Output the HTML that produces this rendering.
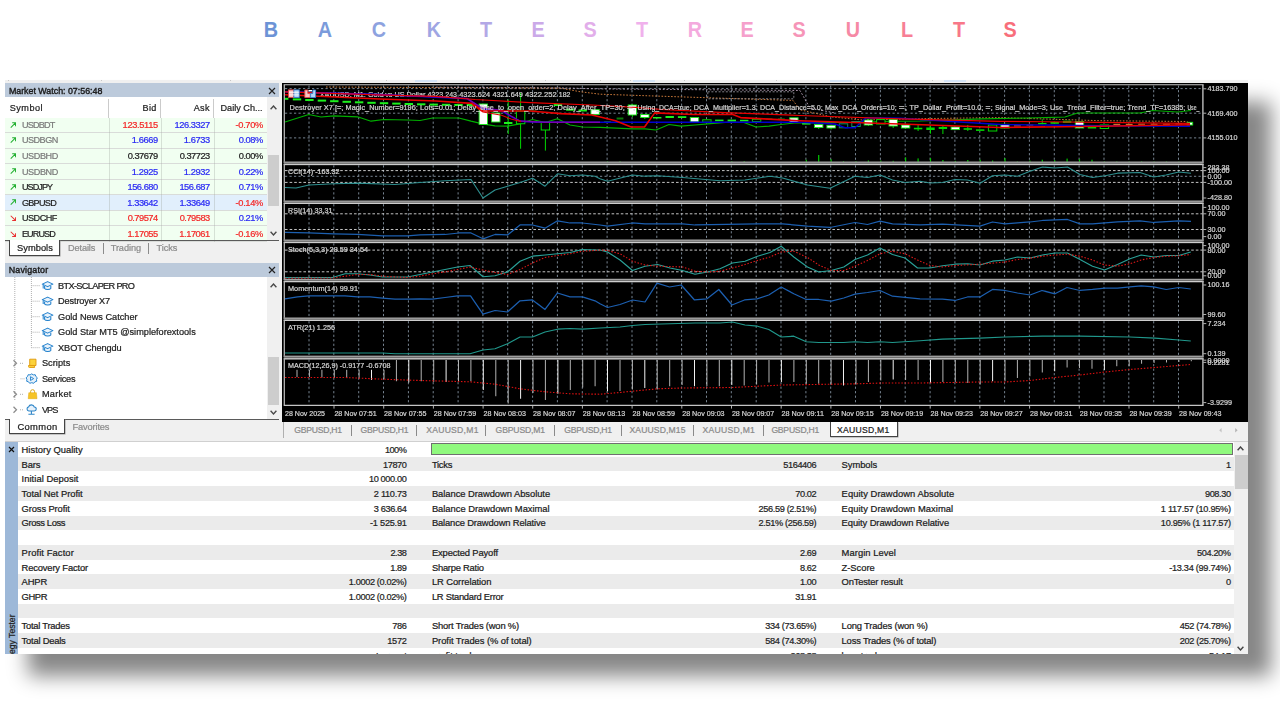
<!DOCTYPE html>
<html><head><meta charset="utf-8"><title>Backtest Results</title>
<style>
html,body{margin:0;padding:0;background:#fff;}
body{width:1280px;height:720px;overflow:hidden;position:relative;font-family:"Liberation Sans",sans-serif;}
#title{position:absolute;left:0;top:0;width:1280px;height:60px;}
#title span{position:absolute;top:14.6px;width:40px;margin-left:-20px;text-align:center;font-weight:bold;font-size:21.3px;line-height:30px;transform:scaleX(0.93);}
#shadow{position:absolute;left:5px;top:80px;width:1243px;height:574px;background:#f0f0f0;box-shadow:23px 22px 19px 0px rgba(0,0,0,0.475);}
#clip{position:absolute;left:5px;top:80px;width:1243px;height:574px;overflow:hidden;filter:blur(0.42px);}
#in{position:absolute;left:-5px;top:-80px;width:1280px;height:720px;-webkit-text-stroke:0.22px;}
svg{position:absolute;display:block;}
</style></head><body>

<div id="title">
<span style="left:271px;color:#6c93d6">B</span>
<span style="left:325px;color:#7b9bdb">A</span>
<span style="left:379px;color:#8da2df">C</span>
<span style="left:434px;color:#9fa6e3">K</span>
<span style="left:485.5px;color:#b3a8e6">T</span>
<span style="left:538px;color:#cba9e8">E</span>
<span style="left:590px;color:#e2aeea">S</span>
<span style="left:642px;color:#f0b1ec">T</span>
<span style="left:694.5px;color:#f4aade">R</span>
<span style="left:747px;color:#f5a0cb">E</span>
<span style="left:799px;color:#f695b8">S</span>
<span style="left:852.5px;color:#f689a5">U</span>
<span style="left:907px;color:#f77f95">L</span>
<span style="left:959px;color:#f87788">T</span>
<span style="left:1010px;color:#f86e7b">S</span>
</div>
<div id="shadow"></div><div id="clip"><div id="in">
<div style="position:absolute;left:8.00px;top:80.30px;width:1.00px;height:1.20px;background:#c6c6c6;"></div>
<div style="position:absolute;left:101.00px;top:80.30px;width:1.00px;height:1.20px;background:#c6c6c6;"></div>
<div style="position:absolute;left:230.00px;top:80.30px;width:1.00px;height:1.20px;background:#c6c6c6;"></div>
<div style="position:absolute;left:386.00px;top:80.30px;width:1.00px;height:1.20px;background:#c6c6c6;"></div>
<div style="position:absolute;left:466.00px;top:80.30px;width:1.00px;height:1.20px;background:#c6c6c6;"></div>
<div style="position:absolute;left:545.00px;top:80.30px;width:1.00px;height:1.20px;background:#c6c6c6;"></div>
<div style="position:absolute;left:600.00px;top:80.30px;width:1.00px;height:1.20px;background:#c6c6c6;"></div>
<div style="position:absolute;left:630.00px;top:80.30px;width:1.00px;height:1.20px;background:#c6c6c6;"></div>
<div style="position:absolute;left:684.00px;top:80.30px;width:1.00px;height:1.20px;background:#c6c6c6;"></div>
<div style="position:absolute;left:776.00px;top:80.30px;width:1.00px;height:1.20px;background:#c6c6c6;"></div>
<div style="position:absolute;left:932.00px;top:80.30px;width:1.00px;height:1.20px;background:#c6c6c6;"></div>
<div style="position:absolute;left:415.00px;top:80.00px;width:22.00px;height:1.60px;background:#d3e3f6;"></div>
<div style="position:absolute;left:633.00px;top:80.00px;width:22.00px;height:1.60px;background:#d3e3f6;"></div>
<div style="position:absolute;left:830.00px;top:80.00px;width:22.00px;height:1.60px;background:#d3e3f6;"></div>
<div style="position:absolute;left:944.00px;top:80.00px;width:22.00px;height:1.60px;background:#d3e3f6;"></div>
<div style="position:absolute;left:5.00px;top:83.20px;width:274.00px;height:13.80px;background:#bccadb;"></div>
<div style="position:absolute;top:84.40px;height:14px;line-height:14px;font-size:8.9px;color:#1a1a1a;white-space:nowrap;letter-spacing:-0.021px;left:8.90px;-webkit-text-stroke:0.38px;">Market Watch: 07:56:48</div>
<svg style="left:267.5px;top:86.5px" width="8" height="8" viewBox="0 0 8 8"><path d="M1 1L7 7M7 1L1 7" stroke="#222" stroke-width="1.2" fill="none"/></svg>
<div style="position:absolute;left:5.00px;top:97.00px;width:262.00px;height:20.50px;background:#fff;"></div>
<div style="position:absolute;top:101.10px;height:14px;line-height:14px;font-size:9.1px;color:#222;white-space:nowrap;letter-spacing:0.471px;left:9.80px;">Symbol</div>
<div style="position:absolute;top:101.10px;height:14px;line-height:14px;font-size:9.1px;color:#222;white-space:nowrap;letter-spacing:0.377px;margin-right:-0.377px;right:1123.60px;text-align:right;">Bid</div>
<div style="position:absolute;top:101.10px;height:14px;line-height:14px;font-size:9.1px;color:#222;white-space:nowrap;letter-spacing:0.398px;margin-right:-0.398px;right:1070.40px;text-align:right;">Ask</div>
<div style="position:absolute;top:101.10px;height:14px;line-height:14px;font-size:9.1px;color:#222;white-space:nowrap;letter-spacing:0.019px;left:220.50px;">Daily Ch...</div>
<div style="position:absolute;left:108.30px;top:98.50px;width:1.20px;height:19.00px;background:#cbcbcb;"></div>
<div style="position:absolute;left:160.20px;top:98.50px;width:1.20px;height:19.00px;background:#cbcbcb;"></div>
<div style="position:absolute;left:213.10px;top:98.50px;width:1.20px;height:19.00px;background:#cbcbcb;"></div>
<div style="position:absolute;left:5.00px;top:117.50px;width:262.00px;height:15.52px;background:#f1fff1;"></div>
<div style="position:absolute;left:5.00px;top:132.22px;width:262.00px;height:0.90px;background:#d9dcd9;"></div>
<svg style="left:9.6px;top:121.66px" width="6.4" height="6.4" viewBox="0 0 7 7"><path d="M0.8 6.2L6 1M2.4 0.9H6.1V4.6" stroke="#22b030" stroke-width="1.1" fill="none"/></svg>
<div style="position:absolute;top:117.96px;height:14px;line-height:14px;font-size:9.1px;color:#7a7a7a;white-space:nowrap;letter-spacing:-0.790px;left:21.90px;">USDBDT</div>
<div style="position:absolute;top:117.96px;height:14px;line-height:14px;font-size:9.3px;color:#f42828;white-space:nowrap;letter-spacing:-0.350px;margin-right:0.350px;right:1121.80px;text-align:right;">123.5115</div>
<div style="position:absolute;top:117.96px;height:14px;line-height:14px;font-size:9.3px;color:#2a2af4;white-space:nowrap;letter-spacing:-0.441px;margin-right:0.441px;right:1069.80px;text-align:right;">126.3327</div>
<div style="position:absolute;top:117.96px;height:14px;line-height:14px;font-size:9.3px;color:#f42828;white-space:nowrap;letter-spacing:-0.371px;margin-right:0.371px;right:1016.80px;text-align:right;">-0.70%</div>
<div style="position:absolute;left:5.00px;top:133.02px;width:262.00px;height:15.52px;background:#f1fff1;"></div>
<div style="position:absolute;left:5.00px;top:147.74px;width:262.00px;height:0.90px;background:#d9dcd9;"></div>
<svg style="left:9.6px;top:137.18px" width="6.4" height="6.4" viewBox="0 0 7 7"><path d="M0.8 6.2L6 1M2.4 0.9H6.1V4.6" stroke="#22b030" stroke-width="1.1" fill="none"/></svg>
<div style="position:absolute;top:133.48px;height:14px;line-height:14px;font-size:9.1px;color:#7a7a7a;white-space:nowrap;letter-spacing:-0.499px;left:21.90px;">USDBGN</div>
<div style="position:absolute;top:133.48px;height:14px;line-height:14px;font-size:9.3px;color:#2a2af4;white-space:nowrap;letter-spacing:-0.397px;margin-right:0.397px;right:1121.80px;text-align:right;">1.6669</div>
<div style="position:absolute;top:133.48px;height:14px;line-height:14px;font-size:9.3px;color:#2a2af4;white-space:nowrap;letter-spacing:-0.392px;margin-right:0.392px;right:1069.80px;text-align:right;">1.6733</div>
<div style="position:absolute;top:133.48px;height:14px;line-height:14px;font-size:9.3px;color:#2a2af4;white-space:nowrap;letter-spacing:-0.489px;margin-right:0.489px;right:1016.80px;text-align:right;">0.08%</div>
<div style="position:absolute;left:5.00px;top:148.54px;width:262.00px;height:15.52px;background:#f1fff1;"></div>
<div style="position:absolute;left:5.00px;top:163.26px;width:262.00px;height:0.90px;background:#d9dcd9;"></div>
<svg style="left:9.6px;top:152.70px" width="6.4" height="6.4" viewBox="0 0 7 7"><path d="M0.8 6.2L6 1M2.4 0.9H6.1V4.6" stroke="#22b030" stroke-width="1.1" fill="none"/></svg>
<div style="position:absolute;top:149.00px;height:14px;line-height:14px;font-size:9.1px;color:#7a7a7a;white-space:nowrap;letter-spacing:-0.391px;left:21.90px;">USDBHD</div>
<div style="position:absolute;top:149.00px;height:14px;line-height:14px;font-size:9.3px;color:#222;white-space:nowrap;letter-spacing:-0.516px;margin-right:0.516px;right:1121.80px;text-align:right;">0.37679</div>
<div style="position:absolute;top:149.00px;height:14px;line-height:14px;font-size:9.3px;color:#222;white-space:nowrap;letter-spacing:-0.514px;margin-right:0.514px;right:1069.80px;text-align:right;">0.37723</div>
<div style="position:absolute;top:149.00px;height:14px;line-height:14px;font-size:9.3px;color:#222;white-space:nowrap;letter-spacing:-0.489px;margin-right:0.489px;right:1016.80px;text-align:right;">0.00%</div>
<div style="position:absolute;left:5.00px;top:164.06px;width:262.00px;height:15.52px;background:#f1fff1;"></div>
<div style="position:absolute;left:5.00px;top:178.78px;width:262.00px;height:0.90px;background:#d9dcd9;"></div>
<svg style="left:9.6px;top:168.22px" width="6.4" height="6.4" viewBox="0 0 7 7"><path d="M0.8 6.2L6 1M2.4 0.9H6.1V4.6" stroke="#22b030" stroke-width="1.1" fill="none"/></svg>
<div style="position:absolute;top:164.52px;height:14px;line-height:14px;font-size:9.1px;color:#7a7a7a;white-space:nowrap;letter-spacing:-0.391px;left:21.90px;">USDBND</div>
<div style="position:absolute;top:164.52px;height:14px;line-height:14px;font-size:9.3px;color:#2a2af4;white-space:nowrap;letter-spacing:-0.397px;margin-right:0.397px;right:1121.80px;text-align:right;">1.2925</div>
<div style="position:absolute;top:164.52px;height:14px;line-height:14px;font-size:9.3px;color:#2a2af4;white-space:nowrap;letter-spacing:-0.390px;margin-right:0.390px;right:1069.80px;text-align:right;">1.2932</div>
<div style="position:absolute;top:164.52px;height:14px;line-height:14px;font-size:9.3px;color:#2a2af4;white-space:nowrap;letter-spacing:-0.489px;margin-right:0.489px;right:1016.80px;text-align:right;">0.22%</div>
<div style="position:absolute;left:5.00px;top:179.58px;width:262.00px;height:15.52px;background:#f1fff1;"></div>
<div style="position:absolute;left:5.00px;top:194.30px;width:262.00px;height:0.90px;background:#d9dcd9;"></div>
<svg style="left:9.6px;top:183.74px" width="6.4" height="6.4" viewBox="0 0 7 7"><path d="M0.8 6.2L6 1M2.4 0.9H6.1V4.6" stroke="#22b030" stroke-width="1.1" fill="none"/></svg>
<div style="position:absolute;top:180.04px;height:14px;line-height:14px;font-size:9.1px;color:#222;white-space:nowrap;letter-spacing:-0.929px;left:21.90px;">USDJPY</div>
<div style="position:absolute;top:180.04px;height:14px;line-height:14px;font-size:9.3px;color:#2a2af4;white-space:nowrap;letter-spacing:-0.478px;margin-right:0.478px;right:1121.80px;text-align:right;">156.680</div>
<div style="position:absolute;top:180.04px;height:14px;line-height:14px;font-size:9.3px;color:#2a2af4;white-space:nowrap;letter-spacing:-0.471px;margin-right:0.471px;right:1069.80px;text-align:right;">156.687</div>
<div style="position:absolute;top:180.04px;height:14px;line-height:14px;font-size:9.3px;color:#2a2af4;white-space:nowrap;letter-spacing:-0.489px;margin-right:0.489px;right:1016.80px;text-align:right;">0.71%</div>
<div style="position:absolute;left:5.00px;top:195.10px;width:262.00px;height:15.52px;background:#e1effc;"></div>
<div style="position:absolute;left:5.00px;top:209.82px;width:262.00px;height:0.90px;background:#d9dcd9;"></div>
<svg style="left:9.6px;top:199.26px" width="6.4" height="6.4" viewBox="0 0 7 7"><path d="M0.8 6.2L6 1M2.4 0.9H6.1V4.6" stroke="#22b030" stroke-width="1.1" fill="none"/></svg>
<div style="position:absolute;top:195.56px;height:14px;line-height:14px;font-size:9.1px;color:#222;white-space:nowrap;letter-spacing:-0.720px;left:21.90px;">GBPUSD</div>
<div style="position:absolute;top:195.56px;height:14px;line-height:14px;font-size:9.3px;color:#2a2af4;white-space:nowrap;letter-spacing:-0.461px;margin-right:0.461px;right:1121.80px;text-align:right;">1.33642</div>
<div style="position:absolute;top:195.56px;height:14px;line-height:14px;font-size:9.3px;color:#2a2af4;white-space:nowrap;letter-spacing:-0.471px;margin-right:0.471px;right:1069.80px;text-align:right;">1.33649</div>
<div style="position:absolute;top:195.56px;height:14px;line-height:14px;font-size:9.3px;color:#f42828;white-space:nowrap;letter-spacing:-0.371px;margin-right:0.371px;right:1016.80px;text-align:right;">-0.14%</div>
<div style="position:absolute;left:5.00px;top:210.62px;width:262.00px;height:15.52px;background:#f1fff1;"></div>
<div style="position:absolute;left:5.00px;top:225.34px;width:262.00px;height:0.90px;background:#d9dcd9;"></div>
<svg style="left:9.6px;top:214.98px" width="6.4" height="6.4" viewBox="0 0 7 7"><path d="M0.8 0.8L6 6M2.4 6.1H6.1V2.4" stroke="#e83030" stroke-width="1.1" fill="none"/></svg>
<div style="position:absolute;top:211.08px;height:14px;line-height:14px;font-size:9.1px;color:#222;white-space:nowrap;letter-spacing:-0.485px;left:21.90px;">USDCHF</div>
<div style="position:absolute;top:211.08px;height:14px;line-height:14px;font-size:9.3px;color:#f42828;white-space:nowrap;letter-spacing:-0.506px;margin-right:0.506px;right:1121.80px;text-align:right;">0.79574</div>
<div style="position:absolute;top:211.08px;height:14px;line-height:14px;font-size:9.3px;color:#f42828;white-space:nowrap;letter-spacing:-0.514px;margin-right:0.514px;right:1069.80px;text-align:right;">0.79583</div>
<div style="position:absolute;top:211.08px;height:14px;line-height:14px;font-size:9.3px;color:#2a2af4;white-space:nowrap;letter-spacing:-0.489px;margin-right:0.489px;right:1016.80px;text-align:right;">0.21%</div>
<div style="position:absolute;left:5.00px;top:226.14px;width:262.00px;height:15.52px;background:#f1fff1;"></div>
<div style="position:absolute;left:5.00px;top:240.86px;width:262.00px;height:0.90px;background:#d9dcd9;"></div>
<svg style="left:9.6px;top:230.50px" width="6.4" height="6.4" viewBox="0 0 7 7"><path d="M0.8 0.8L6 6M2.4 6.1H6.1V2.4" stroke="#e83030" stroke-width="1.1" fill="none"/></svg>
<div style="position:absolute;top:226.60px;height:14px;line-height:14px;font-size:9.1px;color:#222;white-space:nowrap;letter-spacing:-0.885px;left:21.90px;">EURUSD</div>
<div style="position:absolute;top:226.60px;height:14px;line-height:14px;font-size:9.3px;color:#f42828;white-space:nowrap;letter-spacing:-0.471px;margin-right:0.471px;right:1121.80px;text-align:right;">1.17055</div>
<div style="position:absolute;top:226.60px;height:14px;line-height:14px;font-size:9.3px;color:#f42828;white-space:nowrap;letter-spacing:-0.461px;margin-right:0.461px;right:1069.80px;text-align:right;">1.17061</div>
<div style="position:absolute;top:226.60px;height:14px;line-height:14px;font-size:9.3px;color:#f42828;white-space:nowrap;letter-spacing:-0.371px;margin-right:0.371px;right:1016.80px;text-align:right;">-0.16%</div>
<div style="position:absolute;left:108.70px;top:117.50px;width:1.00px;height:124.16px;background:rgba(160,170,160,0.35);"></div>
<div style="position:absolute;left:160.60px;top:117.50px;width:1.00px;height:124.16px;background:rgba(160,170,160,0.35);"></div>
<div style="position:absolute;left:213.50px;top:117.50px;width:1.00px;height:124.16px;background:rgba(160,170,160,0.35);"></div>
<div style="position:absolute;left:267.00px;top:97.50px;width:12.00px;height:143.00px;background:#f0f0f0;"></div>
<div style="position:absolute;left:267.60px;top:155.00px;width:11.00px;height:50.50px;background:#cdcdcd;"></div>
<svg style="left:269.5px;top:104.5px" width="7" height="5" viewBox="0 0 7 5"><path d="M0.6 4.2L3.5 1L6.4 4.2" stroke="#484848" stroke-width="1.35" fill="none"/></svg>
<svg style="left:269.5px;top:231px" width="7" height="5" viewBox="0 0 7 5"><path d="M0.6 0.8L3.5 4L6.4 0.8" stroke="#484848" stroke-width="1.35" fill="none"/></svg>
<div style="position:absolute;left:5.00px;top:239.60px;width:274.00px;height:1.00px;background:#5a5a5a;"></div>
<div style="position:absolute;left:9px;top:239.6px;width:48.6px;height:15px;background:#fff;border:1px solid #444;border-top:none;box-shadow:0.5px 0.5px 0 #999"></div>
<div style="position:absolute;top:240.80px;height:14px;line-height:14px;font-size:9.3px;color:#222;white-space:nowrap;letter-spacing:0.032px;left:17.00px;">Symbols</div>
<div style="position:absolute;top:240.80px;height:14px;line-height:14px;font-size:9.2px;color:#8c8c8c;white-space:nowrap;letter-spacing:-0.100px;left:67.90px;">Details</div>
<div style="position:absolute;top:240.80px;height:14px;line-height:14px;font-size:9.2px;color:#8c8c8c;white-space:nowrap;letter-spacing:-0.078px;left:110.70px;">Trading</div>
<div style="position:absolute;top:240.80px;height:14px;line-height:14px;font-size:9.2px;color:#8c8c8c;white-space:nowrap;letter-spacing:-0.071px;left:156.60px;">Ticks</div>
<div style="position:absolute;left:102.50px;top:242.50px;width:1.00px;height:11.00px;background:#8c8c8c;"></div>
<div style="position:absolute;left:148.30px;top:242.50px;width:1.00px;height:11.00px;background:#8c8c8c;"></div>
<div style="position:absolute;left:5.00px;top:262.50px;width:274.00px;height:14.20px;background:#bccadb;"></div>
<div style="position:absolute;top:263.00px;height:14px;line-height:14px;font-size:8.9px;color:#1a1a1a;white-space:nowrap;letter-spacing:0.167px;left:8.80px;-webkit-text-stroke:0.38px;">Navigator</div>
<svg style="left:267.5px;top:266px" width="8" height="8" viewBox="0 0 8 8"><path d="M1 1L7 7M7 1L1 7" stroke="#222" stroke-width="1.2" fill="none"/></svg>
<div style="position:absolute;left:5.00px;top:276.70px;width:262.00px;height:143.00px;background:#fff;"></div>
<div style="position:absolute;left:267.00px;top:276.70px;width:12.00px;height:143.00px;background:#f0f0f0;"></div>
<div style="position:absolute;left:267.60px;top:357.00px;width:11.00px;height:48.00px;background:#cdcdcd;"></div>
<svg style="left:269.5px;top:283px" width="7" height="5" viewBox="0 0 7 5"><path d="M0.6 4.2L3.5 1L6.4 4.2" stroke="#484848" stroke-width="1.35" fill="none"/></svg>
<svg style="left:269.5px;top:410px" width="7" height="5" viewBox="0 0 7 5"><path d="M0.6 0.8L3.5 4L6.4 0.8" stroke="#484848" stroke-width="1.35" fill="none"/></svg>
<svg style="left:0;top:0" width="280" height="440" viewBox="0 0 280 440">
<path d="M14.8 277V400" stroke="#b0b0b0" stroke-width="1" stroke-dasharray="1 1" fill="none"/>
<path d="M31.4 277V347.7" stroke="#b0b0b0" stroke-width="1" stroke-dasharray="1 1" fill="none"/>
<path d="M31.4 285.7H40" stroke="#b0b0b0" stroke-width="1" stroke-dasharray="1 1" fill="none"/>
<path d="M31.4 301.2H40" stroke="#b0b0b0" stroke-width="1" stroke-dasharray="1 1" fill="none"/>
<path d="M31.4 316.7H40" stroke="#b0b0b0" stroke-width="1" stroke-dasharray="1 1" fill="none"/>
<path d="M31.4 332.2H40" stroke="#b0b0b0" stroke-width="1" stroke-dasharray="1 1" fill="none"/>
<path d="M31.4 347.7H40" stroke="#b0b0b0" stroke-width="1" stroke-dasharray="1 1" fill="none"/>
<path d="M13.5 360.3L16.5 363.3L13.5 366.3" stroke="#8c8c8c" stroke-width="1.25" fill="none"/>
<path d="M20 363.3H24" stroke="#b0b0b0" stroke-width="1" stroke-dasharray="1 1" fill="none"/>
<path d="M13.5 391.3L16.5 394.3L13.5 397.3" stroke="#8c8c8c" stroke-width="1.25" fill="none"/>
<path d="M20 394.3H24" stroke="#b0b0b0" stroke-width="1" stroke-dasharray="1 1" fill="none"/>
<path d="M13.5 406.8L16.5 409.8L13.5 412.8" stroke="#8c8c8c" stroke-width="1.25" fill="none"/>
<path d="M20 409.8H24" stroke="#b0b0b0" stroke-width="1" stroke-dasharray="1 1" fill="none"/>
<path d="M20.5 378.8H25" stroke="#b0b0b0" stroke-width="1" stroke-dasharray="1 1" fill="none"/>
<g transform="translate(41.6,280.5)"><path d="M3 5.4V8C4 9.3 8.2 9.3 9.2 8V5.4" fill="#eaf3fb" stroke="#1f7fcc" stroke-width="1.05"/><path d="M0.7 3.6L6 1.1L11.3 3.6L6 6.1Z" fill="#eaf3fb" stroke="#1f7fcc" stroke-width="1.05" stroke-linejoin="round"/><path d="M1.6 4.2V8" stroke="#1f7fcc" stroke-width="1"/></g>
<g transform="translate(41.6,296.0)"><path d="M3 5.4V8C4 9.3 8.2 9.3 9.2 8V5.4" fill="#eaf3fb" stroke="#1f7fcc" stroke-width="1.05"/><path d="M0.7 3.6L6 1.1L11.3 3.6L6 6.1Z" fill="#eaf3fb" stroke="#1f7fcc" stroke-width="1.05" stroke-linejoin="round"/><path d="M1.6 4.2V8" stroke="#1f7fcc" stroke-width="1"/></g>
<g transform="translate(41.6,311.5)"><path d="M3 5.4V8C4 9.3 8.2 9.3 9.2 8V5.4" fill="#eaf3fb" stroke="#1f7fcc" stroke-width="1.05"/><path d="M0.7 3.6L6 1.1L11.3 3.6L6 6.1Z" fill="#eaf3fb" stroke="#1f7fcc" stroke-width="1.05" stroke-linejoin="round"/><path d="M1.6 4.2V8" stroke="#1f7fcc" stroke-width="1"/></g>
<g transform="translate(41.6,327.0)"><path d="M3 5.4V8C4 9.3 8.2 9.3 9.2 8V5.4" fill="#eaf3fb" stroke="#1f7fcc" stroke-width="1.05"/><path d="M0.7 3.6L6 1.1L11.3 3.6L6 6.1Z" fill="#eaf3fb" stroke="#1f7fcc" stroke-width="1.05" stroke-linejoin="round"/><path d="M1.6 4.2V8" stroke="#1f7fcc" stroke-width="1"/></g>
<g transform="translate(41.6,342.5)"><path d="M3 5.4V8C4 9.3 8.2 9.3 9.2 8V5.4" fill="#eaf3fb" stroke="#1f7fcc" stroke-width="1.05"/><path d="M0.7 3.6L6 1.1L11.3 3.6L6 6.1Z" fill="#eaf3fb" stroke="#1f7fcc" stroke-width="1.05" stroke-linejoin="round"/><path d="M1.6 4.2V8" stroke="#1f7fcc" stroke-width="1"/></g>
<g transform="translate(28,358.3)"><path d="M1.7 0.9H8V7.2H1.7Z" fill="#fbd23a" stroke="#e09a10" stroke-width="0.9"/><path d="M0.5 7.2H6.6V9.2H1.5Q0.5 9.2 0.5 8.2Z" fill="#fbd23a" stroke="#e09a10" stroke-width="0.9"/></g>
<g transform="translate(26.3,373.40000000000003)"><path d="M5.4 0.5L7 1.5L8.9 1.3L9.6 3.1L11 4.4L10.2 6L10.4 7.9L8.6 8.4L7.4 9.9L5.4 9.3L3.4 9.9L2.2 8.4L0.4 7.9L0.6 6L-0.2 4.4L1.2 3.1L1.9 1.3L3.8 1.5Z" fill="#e4f0fa" stroke="#1f7fcc" stroke-width="0.95" stroke-linejoin="round"/><path d="M4.2 3.3L7.4 5.2L4.2 7.1Z" fill="#e4f0fa" stroke="#1f7fcc" stroke-width="0.9" stroke-linejoin="round"/></g>
<g transform="translate(28,388.90000000000003)"><path d="M2.6 4V2.8A2 2 0 0 1 6.6 2.8V4" fill="none" stroke="#d9a514" stroke-width="1"/><path d="M0.8 3.8H8.4L9 9.8H0.2Z" fill="#f6c425" stroke="#e0a810" stroke-width="0.5"/></g>
<g transform="translate(26,404.6)"><path d="M2.8 6.4A2.1 2.1 0 0 1 2.6 2.3A3 3 0 0 1 8.3 2.4A2 2 0 0 1 8.2 6.4Z" fill="#e6f1fb" stroke="#2f86c8" stroke-width="1.1"/><path d="M5.4 6.4V9.3M2.4 9.6H8.6" stroke="#2f86c8" stroke-width="1.1"/></g>
</svg>
<div style="position:absolute;top:278.70px;height:14px;line-height:14px;font-size:9.2px;color:#222;white-space:nowrap;letter-spacing:-0.673px;left:58.10px;">BTX-SCLAPER PRO</div>
<div style="position:absolute;top:294.20px;height:14px;line-height:14px;font-size:9.2px;color:#222;white-space:nowrap;letter-spacing:-0.137px;left:58.10px;">Destroyer X7</div>
<div style="position:absolute;top:309.70px;height:14px;line-height:14px;font-size:9.2px;color:#222;white-space:nowrap;letter-spacing:-0.011px;left:58.10px;">Gold News Catcher</div>
<div style="position:absolute;top:325.20px;height:14px;line-height:14px;font-size:9.2px;color:#222;white-space:nowrap;letter-spacing:-0.012px;left:58.10px;">Gold Star MT5 @simpleforextools</div>
<div style="position:absolute;top:340.70px;height:14px;line-height:14px;font-size:9.2px;color:#222;white-space:nowrap;letter-spacing:-0.103px;left:58.10px;">XBOT Chengdu</div>
<div style="position:absolute;top:356.30px;height:14px;line-height:14px;font-size:9.2px;color:#222;white-space:nowrap;letter-spacing:0.050px;left:41.90px;">Scripts</div>
<div style="position:absolute;top:371.80px;height:14px;line-height:14px;font-size:9.2px;color:#222;white-space:nowrap;letter-spacing:-0.218px;left:41.90px;">Services</div>
<div style="position:absolute;top:387.30px;height:14px;line-height:14px;font-size:9.2px;color:#222;white-space:nowrap;letter-spacing:0.282px;left:41.90px;">Market</div>
<div style="position:absolute;top:402.80px;height:14px;line-height:14px;font-size:9.2px;color:#222;white-space:nowrap;letter-spacing:-0.981px;left:41.90px;">VPS</div>
<div style="position:absolute;left:5.00px;top:419.40px;width:274.00px;height:1.00px;background:#5a5a5a;"></div>
<div style="position:absolute;left:9px;top:419.4px;width:53.8px;height:13.4px;background:#fff;border:1px solid #444;border-top:none;box-shadow:0.5px 0.5px 0 #999"></div>
<div style="position:absolute;top:419.80px;height:14px;line-height:14px;font-size:9.4px;color:#222;white-space:nowrap;letter-spacing:0.352px;left:17.40px;">Common</div>
<div style="position:absolute;top:419.80px;height:14px;line-height:14px;font-size:9.3px;color:#8c8c8c;white-space:nowrap;letter-spacing:-0.138px;left:72.40px;">Favorites</div>
<svg style="left:282px;top:83px;will-change:transform" width="966" height="339.6" viewBox="282 83 966 339.6" font-family="Liberation Sans, sans-serif">
<rect x="282" y="83" width="966" height="339.6" fill="#000"/>
<line x1="309.0" y1="85.6" x2="309.0" y2="161.8" stroke="#8593a2" stroke-width="0.9" stroke-dasharray="2.2 2.3"/>
<line x1="309.0" y1="165.3" x2="309.0" y2="200.8" stroke="#8593a2" stroke-width="0.9" stroke-dasharray="2.2 2.3"/>
<line x1="309.0" y1="204.2" x2="309.0" y2="239.8" stroke="#8593a2" stroke-width="0.9" stroke-dasharray="2.2 2.3"/>
<line x1="309.0" y1="243.3" x2="309.0" y2="279.0" stroke="#8593a2" stroke-width="0.9" stroke-dasharray="2.2 2.3"/>
<line x1="309.0" y1="282.4" x2="309.0" y2="317.8" stroke="#8593a2" stroke-width="0.9" stroke-dasharray="2.2 2.3"/>
<line x1="309.0" y1="321.2" x2="309.0" y2="355.9" stroke="#8593a2" stroke-width="0.9" stroke-dasharray="2.2 2.3"/>
<line x1="309.0" y1="359.6" x2="309.0" y2="404.7" stroke="#8593a2" stroke-width="0.9" stroke-dasharray="2.2 2.3"/>
<line x1="333.8" y1="85.6" x2="333.8" y2="161.8" stroke="#8593a2" stroke-width="0.9" stroke-dasharray="2.2 2.3"/>
<line x1="333.8" y1="165.3" x2="333.8" y2="200.8" stroke="#8593a2" stroke-width="0.9" stroke-dasharray="2.2 2.3"/>
<line x1="333.8" y1="204.2" x2="333.8" y2="239.8" stroke="#8593a2" stroke-width="0.9" stroke-dasharray="2.2 2.3"/>
<line x1="333.8" y1="243.3" x2="333.8" y2="279.0" stroke="#8593a2" stroke-width="0.9" stroke-dasharray="2.2 2.3"/>
<line x1="333.8" y1="282.4" x2="333.8" y2="317.8" stroke="#8593a2" stroke-width="0.9" stroke-dasharray="2.2 2.3"/>
<line x1="333.8" y1="321.2" x2="333.8" y2="355.9" stroke="#8593a2" stroke-width="0.9" stroke-dasharray="2.2 2.3"/>
<line x1="333.8" y1="359.6" x2="333.8" y2="404.7" stroke="#8593a2" stroke-width="0.9" stroke-dasharray="2.2 2.3"/>
<line x1="358.7" y1="85.6" x2="358.7" y2="161.8" stroke="#8593a2" stroke-width="0.9" stroke-dasharray="2.2 2.3"/>
<line x1="358.7" y1="165.3" x2="358.7" y2="200.8" stroke="#8593a2" stroke-width="0.9" stroke-dasharray="2.2 2.3"/>
<line x1="358.7" y1="204.2" x2="358.7" y2="239.8" stroke="#8593a2" stroke-width="0.9" stroke-dasharray="2.2 2.3"/>
<line x1="358.7" y1="243.3" x2="358.7" y2="279.0" stroke="#8593a2" stroke-width="0.9" stroke-dasharray="2.2 2.3"/>
<line x1="358.7" y1="282.4" x2="358.7" y2="317.8" stroke="#8593a2" stroke-width="0.9" stroke-dasharray="2.2 2.3"/>
<line x1="358.7" y1="321.2" x2="358.7" y2="355.9" stroke="#8593a2" stroke-width="0.9" stroke-dasharray="2.2 2.3"/>
<line x1="358.7" y1="359.6" x2="358.7" y2="404.7" stroke="#8593a2" stroke-width="0.9" stroke-dasharray="2.2 2.3"/>
<line x1="383.5" y1="85.6" x2="383.5" y2="161.8" stroke="#8593a2" stroke-width="0.9" stroke-dasharray="2.2 2.3"/>
<line x1="383.5" y1="165.3" x2="383.5" y2="200.8" stroke="#8593a2" stroke-width="0.9" stroke-dasharray="2.2 2.3"/>
<line x1="383.5" y1="204.2" x2="383.5" y2="239.8" stroke="#8593a2" stroke-width="0.9" stroke-dasharray="2.2 2.3"/>
<line x1="383.5" y1="243.3" x2="383.5" y2="279.0" stroke="#8593a2" stroke-width="0.9" stroke-dasharray="2.2 2.3"/>
<line x1="383.5" y1="282.4" x2="383.5" y2="317.8" stroke="#8593a2" stroke-width="0.9" stroke-dasharray="2.2 2.3"/>
<line x1="383.5" y1="321.2" x2="383.5" y2="355.9" stroke="#8593a2" stroke-width="0.9" stroke-dasharray="2.2 2.3"/>
<line x1="383.5" y1="359.6" x2="383.5" y2="404.7" stroke="#8593a2" stroke-width="0.9" stroke-dasharray="2.2 2.3"/>
<line x1="408.4" y1="85.6" x2="408.4" y2="161.8" stroke="#8593a2" stroke-width="0.9" stroke-dasharray="2.2 2.3"/>
<line x1="408.4" y1="165.3" x2="408.4" y2="200.8" stroke="#8593a2" stroke-width="0.9" stroke-dasharray="2.2 2.3"/>
<line x1="408.4" y1="204.2" x2="408.4" y2="239.8" stroke="#8593a2" stroke-width="0.9" stroke-dasharray="2.2 2.3"/>
<line x1="408.4" y1="243.3" x2="408.4" y2="279.0" stroke="#8593a2" stroke-width="0.9" stroke-dasharray="2.2 2.3"/>
<line x1="408.4" y1="282.4" x2="408.4" y2="317.8" stroke="#8593a2" stroke-width="0.9" stroke-dasharray="2.2 2.3"/>
<line x1="408.4" y1="321.2" x2="408.4" y2="355.9" stroke="#8593a2" stroke-width="0.9" stroke-dasharray="2.2 2.3"/>
<line x1="408.4" y1="359.6" x2="408.4" y2="404.7" stroke="#8593a2" stroke-width="0.9" stroke-dasharray="2.2 2.3"/>
<line x1="433.2" y1="85.6" x2="433.2" y2="161.8" stroke="#8593a2" stroke-width="0.9" stroke-dasharray="2.2 2.3"/>
<line x1="433.2" y1="165.3" x2="433.2" y2="200.8" stroke="#8593a2" stroke-width="0.9" stroke-dasharray="2.2 2.3"/>
<line x1="433.2" y1="204.2" x2="433.2" y2="239.8" stroke="#8593a2" stroke-width="0.9" stroke-dasharray="2.2 2.3"/>
<line x1="433.2" y1="243.3" x2="433.2" y2="279.0" stroke="#8593a2" stroke-width="0.9" stroke-dasharray="2.2 2.3"/>
<line x1="433.2" y1="282.4" x2="433.2" y2="317.8" stroke="#8593a2" stroke-width="0.9" stroke-dasharray="2.2 2.3"/>
<line x1="433.2" y1="321.2" x2="433.2" y2="355.9" stroke="#8593a2" stroke-width="0.9" stroke-dasharray="2.2 2.3"/>
<line x1="433.2" y1="359.6" x2="433.2" y2="404.7" stroke="#8593a2" stroke-width="0.9" stroke-dasharray="2.2 2.3"/>
<line x1="458.1" y1="85.6" x2="458.1" y2="161.8" stroke="#8593a2" stroke-width="0.9" stroke-dasharray="2.2 2.3"/>
<line x1="458.1" y1="165.3" x2="458.1" y2="200.8" stroke="#8593a2" stroke-width="0.9" stroke-dasharray="2.2 2.3"/>
<line x1="458.1" y1="204.2" x2="458.1" y2="239.8" stroke="#8593a2" stroke-width="0.9" stroke-dasharray="2.2 2.3"/>
<line x1="458.1" y1="243.3" x2="458.1" y2="279.0" stroke="#8593a2" stroke-width="0.9" stroke-dasharray="2.2 2.3"/>
<line x1="458.1" y1="282.4" x2="458.1" y2="317.8" stroke="#8593a2" stroke-width="0.9" stroke-dasharray="2.2 2.3"/>
<line x1="458.1" y1="321.2" x2="458.1" y2="355.9" stroke="#8593a2" stroke-width="0.9" stroke-dasharray="2.2 2.3"/>
<line x1="458.1" y1="359.6" x2="458.1" y2="404.7" stroke="#8593a2" stroke-width="0.9" stroke-dasharray="2.2 2.3"/>
<line x1="482.9" y1="85.6" x2="482.9" y2="161.8" stroke="#8593a2" stroke-width="0.9" stroke-dasharray="2.2 2.3"/>
<line x1="482.9" y1="165.3" x2="482.9" y2="200.8" stroke="#8593a2" stroke-width="0.9" stroke-dasharray="2.2 2.3"/>
<line x1="482.9" y1="204.2" x2="482.9" y2="239.8" stroke="#8593a2" stroke-width="0.9" stroke-dasharray="2.2 2.3"/>
<line x1="482.9" y1="243.3" x2="482.9" y2="279.0" stroke="#8593a2" stroke-width="0.9" stroke-dasharray="2.2 2.3"/>
<line x1="482.9" y1="282.4" x2="482.9" y2="317.8" stroke="#8593a2" stroke-width="0.9" stroke-dasharray="2.2 2.3"/>
<line x1="482.9" y1="321.2" x2="482.9" y2="355.9" stroke="#8593a2" stroke-width="0.9" stroke-dasharray="2.2 2.3"/>
<line x1="482.9" y1="359.6" x2="482.9" y2="404.7" stroke="#8593a2" stroke-width="0.9" stroke-dasharray="2.2 2.3"/>
<line x1="507.7" y1="85.6" x2="507.7" y2="161.8" stroke="#8593a2" stroke-width="0.9" stroke-dasharray="2.2 2.3"/>
<line x1="507.7" y1="165.3" x2="507.7" y2="200.8" stroke="#8593a2" stroke-width="0.9" stroke-dasharray="2.2 2.3"/>
<line x1="507.7" y1="204.2" x2="507.7" y2="239.8" stroke="#8593a2" stroke-width="0.9" stroke-dasharray="2.2 2.3"/>
<line x1="507.7" y1="243.3" x2="507.7" y2="279.0" stroke="#8593a2" stroke-width="0.9" stroke-dasharray="2.2 2.3"/>
<line x1="507.7" y1="282.4" x2="507.7" y2="317.8" stroke="#8593a2" stroke-width="0.9" stroke-dasharray="2.2 2.3"/>
<line x1="507.7" y1="321.2" x2="507.7" y2="355.9" stroke="#8593a2" stroke-width="0.9" stroke-dasharray="2.2 2.3"/>
<line x1="507.7" y1="359.6" x2="507.7" y2="404.7" stroke="#8593a2" stroke-width="0.9" stroke-dasharray="2.2 2.3"/>
<line x1="532.6" y1="85.6" x2="532.6" y2="161.8" stroke="#8593a2" stroke-width="0.9" stroke-dasharray="2.2 2.3"/>
<line x1="532.6" y1="165.3" x2="532.6" y2="200.8" stroke="#8593a2" stroke-width="0.9" stroke-dasharray="2.2 2.3"/>
<line x1="532.6" y1="204.2" x2="532.6" y2="239.8" stroke="#8593a2" stroke-width="0.9" stroke-dasharray="2.2 2.3"/>
<line x1="532.6" y1="243.3" x2="532.6" y2="279.0" stroke="#8593a2" stroke-width="0.9" stroke-dasharray="2.2 2.3"/>
<line x1="532.6" y1="282.4" x2="532.6" y2="317.8" stroke="#8593a2" stroke-width="0.9" stroke-dasharray="2.2 2.3"/>
<line x1="532.6" y1="321.2" x2="532.6" y2="355.9" stroke="#8593a2" stroke-width="0.9" stroke-dasharray="2.2 2.3"/>
<line x1="532.6" y1="359.6" x2="532.6" y2="404.7" stroke="#8593a2" stroke-width="0.9" stroke-dasharray="2.2 2.3"/>
<line x1="557.4" y1="85.6" x2="557.4" y2="161.8" stroke="#8593a2" stroke-width="0.9" stroke-dasharray="2.2 2.3"/>
<line x1="557.4" y1="165.3" x2="557.4" y2="200.8" stroke="#8593a2" stroke-width="0.9" stroke-dasharray="2.2 2.3"/>
<line x1="557.4" y1="204.2" x2="557.4" y2="239.8" stroke="#8593a2" stroke-width="0.9" stroke-dasharray="2.2 2.3"/>
<line x1="557.4" y1="243.3" x2="557.4" y2="279.0" stroke="#8593a2" stroke-width="0.9" stroke-dasharray="2.2 2.3"/>
<line x1="557.4" y1="282.4" x2="557.4" y2="317.8" stroke="#8593a2" stroke-width="0.9" stroke-dasharray="2.2 2.3"/>
<line x1="557.4" y1="321.2" x2="557.4" y2="355.9" stroke="#8593a2" stroke-width="0.9" stroke-dasharray="2.2 2.3"/>
<line x1="557.4" y1="359.6" x2="557.4" y2="404.7" stroke="#8593a2" stroke-width="0.9" stroke-dasharray="2.2 2.3"/>
<line x1="582.3" y1="85.6" x2="582.3" y2="161.8" stroke="#8593a2" stroke-width="0.9" stroke-dasharray="2.2 2.3"/>
<line x1="582.3" y1="165.3" x2="582.3" y2="200.8" stroke="#8593a2" stroke-width="0.9" stroke-dasharray="2.2 2.3"/>
<line x1="582.3" y1="204.2" x2="582.3" y2="239.8" stroke="#8593a2" stroke-width="0.9" stroke-dasharray="2.2 2.3"/>
<line x1="582.3" y1="243.3" x2="582.3" y2="279.0" stroke="#8593a2" stroke-width="0.9" stroke-dasharray="2.2 2.3"/>
<line x1="582.3" y1="282.4" x2="582.3" y2="317.8" stroke="#8593a2" stroke-width="0.9" stroke-dasharray="2.2 2.3"/>
<line x1="582.3" y1="321.2" x2="582.3" y2="355.9" stroke="#8593a2" stroke-width="0.9" stroke-dasharray="2.2 2.3"/>
<line x1="582.3" y1="359.6" x2="582.3" y2="404.7" stroke="#8593a2" stroke-width="0.9" stroke-dasharray="2.2 2.3"/>
<line x1="607.1" y1="85.6" x2="607.1" y2="161.8" stroke="#8593a2" stroke-width="0.9" stroke-dasharray="2.2 2.3"/>
<line x1="607.1" y1="165.3" x2="607.1" y2="200.8" stroke="#8593a2" stroke-width="0.9" stroke-dasharray="2.2 2.3"/>
<line x1="607.1" y1="204.2" x2="607.1" y2="239.8" stroke="#8593a2" stroke-width="0.9" stroke-dasharray="2.2 2.3"/>
<line x1="607.1" y1="243.3" x2="607.1" y2="279.0" stroke="#8593a2" stroke-width="0.9" stroke-dasharray="2.2 2.3"/>
<line x1="607.1" y1="282.4" x2="607.1" y2="317.8" stroke="#8593a2" stroke-width="0.9" stroke-dasharray="2.2 2.3"/>
<line x1="607.1" y1="321.2" x2="607.1" y2="355.9" stroke="#8593a2" stroke-width="0.9" stroke-dasharray="2.2 2.3"/>
<line x1="607.1" y1="359.6" x2="607.1" y2="404.7" stroke="#8593a2" stroke-width="0.9" stroke-dasharray="2.2 2.3"/>
<line x1="632.0" y1="85.6" x2="632.0" y2="161.8" stroke="#8593a2" stroke-width="0.9" stroke-dasharray="2.2 2.3"/>
<line x1="632.0" y1="165.3" x2="632.0" y2="200.8" stroke="#8593a2" stroke-width="0.9" stroke-dasharray="2.2 2.3"/>
<line x1="632.0" y1="204.2" x2="632.0" y2="239.8" stroke="#8593a2" stroke-width="0.9" stroke-dasharray="2.2 2.3"/>
<line x1="632.0" y1="243.3" x2="632.0" y2="279.0" stroke="#8593a2" stroke-width="0.9" stroke-dasharray="2.2 2.3"/>
<line x1="632.0" y1="282.4" x2="632.0" y2="317.8" stroke="#8593a2" stroke-width="0.9" stroke-dasharray="2.2 2.3"/>
<line x1="632.0" y1="321.2" x2="632.0" y2="355.9" stroke="#8593a2" stroke-width="0.9" stroke-dasharray="2.2 2.3"/>
<line x1="632.0" y1="359.6" x2="632.0" y2="404.7" stroke="#8593a2" stroke-width="0.9" stroke-dasharray="2.2 2.3"/>
<line x1="656.8" y1="85.6" x2="656.8" y2="161.8" stroke="#8593a2" stroke-width="0.9" stroke-dasharray="2.2 2.3"/>
<line x1="656.8" y1="165.3" x2="656.8" y2="200.8" stroke="#8593a2" stroke-width="0.9" stroke-dasharray="2.2 2.3"/>
<line x1="656.8" y1="204.2" x2="656.8" y2="239.8" stroke="#8593a2" stroke-width="0.9" stroke-dasharray="2.2 2.3"/>
<line x1="656.8" y1="243.3" x2="656.8" y2="279.0" stroke="#8593a2" stroke-width="0.9" stroke-dasharray="2.2 2.3"/>
<line x1="656.8" y1="282.4" x2="656.8" y2="317.8" stroke="#8593a2" stroke-width="0.9" stroke-dasharray="2.2 2.3"/>
<line x1="656.8" y1="321.2" x2="656.8" y2="355.9" stroke="#8593a2" stroke-width="0.9" stroke-dasharray="2.2 2.3"/>
<line x1="656.8" y1="359.6" x2="656.8" y2="404.7" stroke="#8593a2" stroke-width="0.9" stroke-dasharray="2.2 2.3"/>
<line x1="681.6" y1="85.6" x2="681.6" y2="161.8" stroke="#8593a2" stroke-width="0.9" stroke-dasharray="2.2 2.3"/>
<line x1="681.6" y1="165.3" x2="681.6" y2="200.8" stroke="#8593a2" stroke-width="0.9" stroke-dasharray="2.2 2.3"/>
<line x1="681.6" y1="204.2" x2="681.6" y2="239.8" stroke="#8593a2" stroke-width="0.9" stroke-dasharray="2.2 2.3"/>
<line x1="681.6" y1="243.3" x2="681.6" y2="279.0" stroke="#8593a2" stroke-width="0.9" stroke-dasharray="2.2 2.3"/>
<line x1="681.6" y1="282.4" x2="681.6" y2="317.8" stroke="#8593a2" stroke-width="0.9" stroke-dasharray="2.2 2.3"/>
<line x1="681.6" y1="321.2" x2="681.6" y2="355.9" stroke="#8593a2" stroke-width="0.9" stroke-dasharray="2.2 2.3"/>
<line x1="681.6" y1="359.6" x2="681.6" y2="404.7" stroke="#8593a2" stroke-width="0.9" stroke-dasharray="2.2 2.3"/>
<line x1="706.5" y1="85.6" x2="706.5" y2="161.8" stroke="#8593a2" stroke-width="0.9" stroke-dasharray="2.2 2.3"/>
<line x1="706.5" y1="165.3" x2="706.5" y2="200.8" stroke="#8593a2" stroke-width="0.9" stroke-dasharray="2.2 2.3"/>
<line x1="706.5" y1="204.2" x2="706.5" y2="239.8" stroke="#8593a2" stroke-width="0.9" stroke-dasharray="2.2 2.3"/>
<line x1="706.5" y1="243.3" x2="706.5" y2="279.0" stroke="#8593a2" stroke-width="0.9" stroke-dasharray="2.2 2.3"/>
<line x1="706.5" y1="282.4" x2="706.5" y2="317.8" stroke="#8593a2" stroke-width="0.9" stroke-dasharray="2.2 2.3"/>
<line x1="706.5" y1="321.2" x2="706.5" y2="355.9" stroke="#8593a2" stroke-width="0.9" stroke-dasharray="2.2 2.3"/>
<line x1="706.5" y1="359.6" x2="706.5" y2="404.7" stroke="#8593a2" stroke-width="0.9" stroke-dasharray="2.2 2.3"/>
<line x1="731.3" y1="85.6" x2="731.3" y2="161.8" stroke="#8593a2" stroke-width="0.9" stroke-dasharray="2.2 2.3"/>
<line x1="731.3" y1="165.3" x2="731.3" y2="200.8" stroke="#8593a2" stroke-width="0.9" stroke-dasharray="2.2 2.3"/>
<line x1="731.3" y1="204.2" x2="731.3" y2="239.8" stroke="#8593a2" stroke-width="0.9" stroke-dasharray="2.2 2.3"/>
<line x1="731.3" y1="243.3" x2="731.3" y2="279.0" stroke="#8593a2" stroke-width="0.9" stroke-dasharray="2.2 2.3"/>
<line x1="731.3" y1="282.4" x2="731.3" y2="317.8" stroke="#8593a2" stroke-width="0.9" stroke-dasharray="2.2 2.3"/>
<line x1="731.3" y1="321.2" x2="731.3" y2="355.9" stroke="#8593a2" stroke-width="0.9" stroke-dasharray="2.2 2.3"/>
<line x1="731.3" y1="359.6" x2="731.3" y2="404.7" stroke="#8593a2" stroke-width="0.9" stroke-dasharray="2.2 2.3"/>
<line x1="756.2" y1="85.6" x2="756.2" y2="161.8" stroke="#8593a2" stroke-width="0.9" stroke-dasharray="2.2 2.3"/>
<line x1="756.2" y1="165.3" x2="756.2" y2="200.8" stroke="#8593a2" stroke-width="0.9" stroke-dasharray="2.2 2.3"/>
<line x1="756.2" y1="204.2" x2="756.2" y2="239.8" stroke="#8593a2" stroke-width="0.9" stroke-dasharray="2.2 2.3"/>
<line x1="756.2" y1="243.3" x2="756.2" y2="279.0" stroke="#8593a2" stroke-width="0.9" stroke-dasharray="2.2 2.3"/>
<line x1="756.2" y1="282.4" x2="756.2" y2="317.8" stroke="#8593a2" stroke-width="0.9" stroke-dasharray="2.2 2.3"/>
<line x1="756.2" y1="321.2" x2="756.2" y2="355.9" stroke="#8593a2" stroke-width="0.9" stroke-dasharray="2.2 2.3"/>
<line x1="756.2" y1="359.6" x2="756.2" y2="404.7" stroke="#8593a2" stroke-width="0.9" stroke-dasharray="2.2 2.3"/>
<line x1="781.0" y1="85.6" x2="781.0" y2="161.8" stroke="#8593a2" stroke-width="0.9" stroke-dasharray="2.2 2.3"/>
<line x1="781.0" y1="165.3" x2="781.0" y2="200.8" stroke="#8593a2" stroke-width="0.9" stroke-dasharray="2.2 2.3"/>
<line x1="781.0" y1="204.2" x2="781.0" y2="239.8" stroke="#8593a2" stroke-width="0.9" stroke-dasharray="2.2 2.3"/>
<line x1="781.0" y1="243.3" x2="781.0" y2="279.0" stroke="#8593a2" stroke-width="0.9" stroke-dasharray="2.2 2.3"/>
<line x1="781.0" y1="282.4" x2="781.0" y2="317.8" stroke="#8593a2" stroke-width="0.9" stroke-dasharray="2.2 2.3"/>
<line x1="781.0" y1="321.2" x2="781.0" y2="355.9" stroke="#8593a2" stroke-width="0.9" stroke-dasharray="2.2 2.3"/>
<line x1="781.0" y1="359.6" x2="781.0" y2="404.7" stroke="#8593a2" stroke-width="0.9" stroke-dasharray="2.2 2.3"/>
<line x1="805.9" y1="85.6" x2="805.9" y2="161.8" stroke="#8593a2" stroke-width="0.9" stroke-dasharray="2.2 2.3"/>
<line x1="805.9" y1="165.3" x2="805.9" y2="200.8" stroke="#8593a2" stroke-width="0.9" stroke-dasharray="2.2 2.3"/>
<line x1="805.9" y1="204.2" x2="805.9" y2="239.8" stroke="#8593a2" stroke-width="0.9" stroke-dasharray="2.2 2.3"/>
<line x1="805.9" y1="243.3" x2="805.9" y2="279.0" stroke="#8593a2" stroke-width="0.9" stroke-dasharray="2.2 2.3"/>
<line x1="805.9" y1="282.4" x2="805.9" y2="317.8" stroke="#8593a2" stroke-width="0.9" stroke-dasharray="2.2 2.3"/>
<line x1="805.9" y1="321.2" x2="805.9" y2="355.9" stroke="#8593a2" stroke-width="0.9" stroke-dasharray="2.2 2.3"/>
<line x1="805.9" y1="359.6" x2="805.9" y2="404.7" stroke="#8593a2" stroke-width="0.9" stroke-dasharray="2.2 2.3"/>
<line x1="830.7" y1="85.6" x2="830.7" y2="161.8" stroke="#8593a2" stroke-width="0.9" stroke-dasharray="2.2 2.3"/>
<line x1="830.7" y1="165.3" x2="830.7" y2="200.8" stroke="#8593a2" stroke-width="0.9" stroke-dasharray="2.2 2.3"/>
<line x1="830.7" y1="204.2" x2="830.7" y2="239.8" stroke="#8593a2" stroke-width="0.9" stroke-dasharray="2.2 2.3"/>
<line x1="830.7" y1="243.3" x2="830.7" y2="279.0" stroke="#8593a2" stroke-width="0.9" stroke-dasharray="2.2 2.3"/>
<line x1="830.7" y1="282.4" x2="830.7" y2="317.8" stroke="#8593a2" stroke-width="0.9" stroke-dasharray="2.2 2.3"/>
<line x1="830.7" y1="321.2" x2="830.7" y2="355.9" stroke="#8593a2" stroke-width="0.9" stroke-dasharray="2.2 2.3"/>
<line x1="830.7" y1="359.6" x2="830.7" y2="404.7" stroke="#8593a2" stroke-width="0.9" stroke-dasharray="2.2 2.3"/>
<line x1="855.5" y1="85.6" x2="855.5" y2="161.8" stroke="#8593a2" stroke-width="0.9" stroke-dasharray="2.2 2.3"/>
<line x1="855.5" y1="165.3" x2="855.5" y2="200.8" stroke="#8593a2" stroke-width="0.9" stroke-dasharray="2.2 2.3"/>
<line x1="855.5" y1="204.2" x2="855.5" y2="239.8" stroke="#8593a2" stroke-width="0.9" stroke-dasharray="2.2 2.3"/>
<line x1="855.5" y1="243.3" x2="855.5" y2="279.0" stroke="#8593a2" stroke-width="0.9" stroke-dasharray="2.2 2.3"/>
<line x1="855.5" y1="282.4" x2="855.5" y2="317.8" stroke="#8593a2" stroke-width="0.9" stroke-dasharray="2.2 2.3"/>
<line x1="855.5" y1="321.2" x2="855.5" y2="355.9" stroke="#8593a2" stroke-width="0.9" stroke-dasharray="2.2 2.3"/>
<line x1="855.5" y1="359.6" x2="855.5" y2="404.7" stroke="#8593a2" stroke-width="0.9" stroke-dasharray="2.2 2.3"/>
<line x1="880.4" y1="85.6" x2="880.4" y2="161.8" stroke="#8593a2" stroke-width="0.9" stroke-dasharray="2.2 2.3"/>
<line x1="880.4" y1="165.3" x2="880.4" y2="200.8" stroke="#8593a2" stroke-width="0.9" stroke-dasharray="2.2 2.3"/>
<line x1="880.4" y1="204.2" x2="880.4" y2="239.8" stroke="#8593a2" stroke-width="0.9" stroke-dasharray="2.2 2.3"/>
<line x1="880.4" y1="243.3" x2="880.4" y2="279.0" stroke="#8593a2" stroke-width="0.9" stroke-dasharray="2.2 2.3"/>
<line x1="880.4" y1="282.4" x2="880.4" y2="317.8" stroke="#8593a2" stroke-width="0.9" stroke-dasharray="2.2 2.3"/>
<line x1="880.4" y1="321.2" x2="880.4" y2="355.9" stroke="#8593a2" stroke-width="0.9" stroke-dasharray="2.2 2.3"/>
<line x1="880.4" y1="359.6" x2="880.4" y2="404.7" stroke="#8593a2" stroke-width="0.9" stroke-dasharray="2.2 2.3"/>
<line x1="905.2" y1="85.6" x2="905.2" y2="161.8" stroke="#8593a2" stroke-width="0.9" stroke-dasharray="2.2 2.3"/>
<line x1="905.2" y1="165.3" x2="905.2" y2="200.8" stroke="#8593a2" stroke-width="0.9" stroke-dasharray="2.2 2.3"/>
<line x1="905.2" y1="204.2" x2="905.2" y2="239.8" stroke="#8593a2" stroke-width="0.9" stroke-dasharray="2.2 2.3"/>
<line x1="905.2" y1="243.3" x2="905.2" y2="279.0" stroke="#8593a2" stroke-width="0.9" stroke-dasharray="2.2 2.3"/>
<line x1="905.2" y1="282.4" x2="905.2" y2="317.8" stroke="#8593a2" stroke-width="0.9" stroke-dasharray="2.2 2.3"/>
<line x1="905.2" y1="321.2" x2="905.2" y2="355.9" stroke="#8593a2" stroke-width="0.9" stroke-dasharray="2.2 2.3"/>
<line x1="905.2" y1="359.6" x2="905.2" y2="404.7" stroke="#8593a2" stroke-width="0.9" stroke-dasharray="2.2 2.3"/>
<line x1="930.1" y1="85.6" x2="930.1" y2="161.8" stroke="#8593a2" stroke-width="0.9" stroke-dasharray="2.2 2.3"/>
<line x1="930.1" y1="165.3" x2="930.1" y2="200.8" stroke="#8593a2" stroke-width="0.9" stroke-dasharray="2.2 2.3"/>
<line x1="930.1" y1="204.2" x2="930.1" y2="239.8" stroke="#8593a2" stroke-width="0.9" stroke-dasharray="2.2 2.3"/>
<line x1="930.1" y1="243.3" x2="930.1" y2="279.0" stroke="#8593a2" stroke-width="0.9" stroke-dasharray="2.2 2.3"/>
<line x1="930.1" y1="282.4" x2="930.1" y2="317.8" stroke="#8593a2" stroke-width="0.9" stroke-dasharray="2.2 2.3"/>
<line x1="930.1" y1="321.2" x2="930.1" y2="355.9" stroke="#8593a2" stroke-width="0.9" stroke-dasharray="2.2 2.3"/>
<line x1="930.1" y1="359.6" x2="930.1" y2="404.7" stroke="#8593a2" stroke-width="0.9" stroke-dasharray="2.2 2.3"/>
<line x1="954.9" y1="85.6" x2="954.9" y2="161.8" stroke="#8593a2" stroke-width="0.9" stroke-dasharray="2.2 2.3"/>
<line x1="954.9" y1="165.3" x2="954.9" y2="200.8" stroke="#8593a2" stroke-width="0.9" stroke-dasharray="2.2 2.3"/>
<line x1="954.9" y1="204.2" x2="954.9" y2="239.8" stroke="#8593a2" stroke-width="0.9" stroke-dasharray="2.2 2.3"/>
<line x1="954.9" y1="243.3" x2="954.9" y2="279.0" stroke="#8593a2" stroke-width="0.9" stroke-dasharray="2.2 2.3"/>
<line x1="954.9" y1="282.4" x2="954.9" y2="317.8" stroke="#8593a2" stroke-width="0.9" stroke-dasharray="2.2 2.3"/>
<line x1="954.9" y1="321.2" x2="954.9" y2="355.9" stroke="#8593a2" stroke-width="0.9" stroke-dasharray="2.2 2.3"/>
<line x1="954.9" y1="359.6" x2="954.9" y2="404.7" stroke="#8593a2" stroke-width="0.9" stroke-dasharray="2.2 2.3"/>
<line x1="979.8" y1="85.6" x2="979.8" y2="161.8" stroke="#8593a2" stroke-width="0.9" stroke-dasharray="2.2 2.3"/>
<line x1="979.8" y1="165.3" x2="979.8" y2="200.8" stroke="#8593a2" stroke-width="0.9" stroke-dasharray="2.2 2.3"/>
<line x1="979.8" y1="204.2" x2="979.8" y2="239.8" stroke="#8593a2" stroke-width="0.9" stroke-dasharray="2.2 2.3"/>
<line x1="979.8" y1="243.3" x2="979.8" y2="279.0" stroke="#8593a2" stroke-width="0.9" stroke-dasharray="2.2 2.3"/>
<line x1="979.8" y1="282.4" x2="979.8" y2="317.8" stroke="#8593a2" stroke-width="0.9" stroke-dasharray="2.2 2.3"/>
<line x1="979.8" y1="321.2" x2="979.8" y2="355.9" stroke="#8593a2" stroke-width="0.9" stroke-dasharray="2.2 2.3"/>
<line x1="979.8" y1="359.6" x2="979.8" y2="404.7" stroke="#8593a2" stroke-width="0.9" stroke-dasharray="2.2 2.3"/>
<line x1="1004.6" y1="85.6" x2="1004.6" y2="161.8" stroke="#8593a2" stroke-width="0.9" stroke-dasharray="2.2 2.3"/>
<line x1="1004.6" y1="165.3" x2="1004.6" y2="200.8" stroke="#8593a2" stroke-width="0.9" stroke-dasharray="2.2 2.3"/>
<line x1="1004.6" y1="204.2" x2="1004.6" y2="239.8" stroke="#8593a2" stroke-width="0.9" stroke-dasharray="2.2 2.3"/>
<line x1="1004.6" y1="243.3" x2="1004.6" y2="279.0" stroke="#8593a2" stroke-width="0.9" stroke-dasharray="2.2 2.3"/>
<line x1="1004.6" y1="282.4" x2="1004.6" y2="317.8" stroke="#8593a2" stroke-width="0.9" stroke-dasharray="2.2 2.3"/>
<line x1="1004.6" y1="321.2" x2="1004.6" y2="355.9" stroke="#8593a2" stroke-width="0.9" stroke-dasharray="2.2 2.3"/>
<line x1="1004.6" y1="359.6" x2="1004.6" y2="404.7" stroke="#8593a2" stroke-width="0.9" stroke-dasharray="2.2 2.3"/>
<line x1="1029.4" y1="85.6" x2="1029.4" y2="161.8" stroke="#8593a2" stroke-width="0.9" stroke-dasharray="2.2 2.3"/>
<line x1="1029.4" y1="165.3" x2="1029.4" y2="200.8" stroke="#8593a2" stroke-width="0.9" stroke-dasharray="2.2 2.3"/>
<line x1="1029.4" y1="204.2" x2="1029.4" y2="239.8" stroke="#8593a2" stroke-width="0.9" stroke-dasharray="2.2 2.3"/>
<line x1="1029.4" y1="243.3" x2="1029.4" y2="279.0" stroke="#8593a2" stroke-width="0.9" stroke-dasharray="2.2 2.3"/>
<line x1="1029.4" y1="282.4" x2="1029.4" y2="317.8" stroke="#8593a2" stroke-width="0.9" stroke-dasharray="2.2 2.3"/>
<line x1="1029.4" y1="321.2" x2="1029.4" y2="355.9" stroke="#8593a2" stroke-width="0.9" stroke-dasharray="2.2 2.3"/>
<line x1="1029.4" y1="359.6" x2="1029.4" y2="404.7" stroke="#8593a2" stroke-width="0.9" stroke-dasharray="2.2 2.3"/>
<line x1="1054.3" y1="85.6" x2="1054.3" y2="161.8" stroke="#8593a2" stroke-width="0.9" stroke-dasharray="2.2 2.3"/>
<line x1="1054.3" y1="165.3" x2="1054.3" y2="200.8" stroke="#8593a2" stroke-width="0.9" stroke-dasharray="2.2 2.3"/>
<line x1="1054.3" y1="204.2" x2="1054.3" y2="239.8" stroke="#8593a2" stroke-width="0.9" stroke-dasharray="2.2 2.3"/>
<line x1="1054.3" y1="243.3" x2="1054.3" y2="279.0" stroke="#8593a2" stroke-width="0.9" stroke-dasharray="2.2 2.3"/>
<line x1="1054.3" y1="282.4" x2="1054.3" y2="317.8" stroke="#8593a2" stroke-width="0.9" stroke-dasharray="2.2 2.3"/>
<line x1="1054.3" y1="321.2" x2="1054.3" y2="355.9" stroke="#8593a2" stroke-width="0.9" stroke-dasharray="2.2 2.3"/>
<line x1="1054.3" y1="359.6" x2="1054.3" y2="404.7" stroke="#8593a2" stroke-width="0.9" stroke-dasharray="2.2 2.3"/>
<line x1="1079.1" y1="85.6" x2="1079.1" y2="161.8" stroke="#8593a2" stroke-width="0.9" stroke-dasharray="2.2 2.3"/>
<line x1="1079.1" y1="165.3" x2="1079.1" y2="200.8" stroke="#8593a2" stroke-width="0.9" stroke-dasharray="2.2 2.3"/>
<line x1="1079.1" y1="204.2" x2="1079.1" y2="239.8" stroke="#8593a2" stroke-width="0.9" stroke-dasharray="2.2 2.3"/>
<line x1="1079.1" y1="243.3" x2="1079.1" y2="279.0" stroke="#8593a2" stroke-width="0.9" stroke-dasharray="2.2 2.3"/>
<line x1="1079.1" y1="282.4" x2="1079.1" y2="317.8" stroke="#8593a2" stroke-width="0.9" stroke-dasharray="2.2 2.3"/>
<line x1="1079.1" y1="321.2" x2="1079.1" y2="355.9" stroke="#8593a2" stroke-width="0.9" stroke-dasharray="2.2 2.3"/>
<line x1="1079.1" y1="359.6" x2="1079.1" y2="404.7" stroke="#8593a2" stroke-width="0.9" stroke-dasharray="2.2 2.3"/>
<line x1="1104.0" y1="85.6" x2="1104.0" y2="161.8" stroke="#8593a2" stroke-width="0.9" stroke-dasharray="2.2 2.3"/>
<line x1="1104.0" y1="165.3" x2="1104.0" y2="200.8" stroke="#8593a2" stroke-width="0.9" stroke-dasharray="2.2 2.3"/>
<line x1="1104.0" y1="204.2" x2="1104.0" y2="239.8" stroke="#8593a2" stroke-width="0.9" stroke-dasharray="2.2 2.3"/>
<line x1="1104.0" y1="243.3" x2="1104.0" y2="279.0" stroke="#8593a2" stroke-width="0.9" stroke-dasharray="2.2 2.3"/>
<line x1="1104.0" y1="282.4" x2="1104.0" y2="317.8" stroke="#8593a2" stroke-width="0.9" stroke-dasharray="2.2 2.3"/>
<line x1="1104.0" y1="321.2" x2="1104.0" y2="355.9" stroke="#8593a2" stroke-width="0.9" stroke-dasharray="2.2 2.3"/>
<line x1="1104.0" y1="359.6" x2="1104.0" y2="404.7" stroke="#8593a2" stroke-width="0.9" stroke-dasharray="2.2 2.3"/>
<line x1="1128.8" y1="85.6" x2="1128.8" y2="161.8" stroke="#8593a2" stroke-width="0.9" stroke-dasharray="2.2 2.3"/>
<line x1="1128.8" y1="165.3" x2="1128.8" y2="200.8" stroke="#8593a2" stroke-width="0.9" stroke-dasharray="2.2 2.3"/>
<line x1="1128.8" y1="204.2" x2="1128.8" y2="239.8" stroke="#8593a2" stroke-width="0.9" stroke-dasharray="2.2 2.3"/>
<line x1="1128.8" y1="243.3" x2="1128.8" y2="279.0" stroke="#8593a2" stroke-width="0.9" stroke-dasharray="2.2 2.3"/>
<line x1="1128.8" y1="282.4" x2="1128.8" y2="317.8" stroke="#8593a2" stroke-width="0.9" stroke-dasharray="2.2 2.3"/>
<line x1="1128.8" y1="321.2" x2="1128.8" y2="355.9" stroke="#8593a2" stroke-width="0.9" stroke-dasharray="2.2 2.3"/>
<line x1="1128.8" y1="359.6" x2="1128.8" y2="404.7" stroke="#8593a2" stroke-width="0.9" stroke-dasharray="2.2 2.3"/>
<line x1="1153.7" y1="85.6" x2="1153.7" y2="161.8" stroke="#8593a2" stroke-width="0.9" stroke-dasharray="2.2 2.3"/>
<line x1="1153.7" y1="165.3" x2="1153.7" y2="200.8" stroke="#8593a2" stroke-width="0.9" stroke-dasharray="2.2 2.3"/>
<line x1="1153.7" y1="204.2" x2="1153.7" y2="239.8" stroke="#8593a2" stroke-width="0.9" stroke-dasharray="2.2 2.3"/>
<line x1="1153.7" y1="243.3" x2="1153.7" y2="279.0" stroke="#8593a2" stroke-width="0.9" stroke-dasharray="2.2 2.3"/>
<line x1="1153.7" y1="282.4" x2="1153.7" y2="317.8" stroke="#8593a2" stroke-width="0.9" stroke-dasharray="2.2 2.3"/>
<line x1="1153.7" y1="321.2" x2="1153.7" y2="355.9" stroke="#8593a2" stroke-width="0.9" stroke-dasharray="2.2 2.3"/>
<line x1="1153.7" y1="359.6" x2="1153.7" y2="404.7" stroke="#8593a2" stroke-width="0.9" stroke-dasharray="2.2 2.3"/>
<line x1="1178.5" y1="85.6" x2="1178.5" y2="161.8" stroke="#8593a2" stroke-width="0.9" stroke-dasharray="2.2 2.3"/>
<line x1="1178.5" y1="165.3" x2="1178.5" y2="200.8" stroke="#8593a2" stroke-width="0.9" stroke-dasharray="2.2 2.3"/>
<line x1="1178.5" y1="204.2" x2="1178.5" y2="239.8" stroke="#8593a2" stroke-width="0.9" stroke-dasharray="2.2 2.3"/>
<line x1="1178.5" y1="243.3" x2="1178.5" y2="279.0" stroke="#8593a2" stroke-width="0.9" stroke-dasharray="2.2 2.3"/>
<line x1="1178.5" y1="282.4" x2="1178.5" y2="317.8" stroke="#8593a2" stroke-width="0.9" stroke-dasharray="2.2 2.3"/>
<line x1="1178.5" y1="321.2" x2="1178.5" y2="355.9" stroke="#8593a2" stroke-width="0.9" stroke-dasharray="2.2 2.3"/>
<line x1="1178.5" y1="359.6" x2="1178.5" y2="404.7" stroke="#8593a2" stroke-width="0.9" stroke-dasharray="2.2 2.3"/>
<line x1="285" y1="88.6" x2="1203" y2="88.6" stroke="#8593a2" stroke-width="0.9" stroke-dasharray="2.2 2.3"/>
<line x1="285" y1="113.2" x2="1203" y2="113.2" stroke="#8593a2" stroke-width="0.9" stroke-dasharray="2.2 2.3"/>
<line x1="285" y1="137.9" x2="1203" y2="137.9" stroke="#8593a2" stroke-width="0.9" stroke-dasharray="2.2 2.3"/>
<line x1="285" y1="170.6" x2="1203" y2="170.6" stroke="#cfcfcf" stroke-width="0.95" stroke-dasharray="2.6 2.0"/>
<line x1="285" y1="182.4" x2="1203" y2="182.4" stroke="#cfcfcf" stroke-width="0.95" stroke-dasharray="2.6 2.0"/>
<line x1="285" y1="176.3" x2="1203" y2="176.3" stroke="#8593a2" stroke-width="0.9" stroke-dasharray="2.2 2.3"/>
<line x1="285" y1="213.8" x2="1203" y2="213.8" stroke="#cfcfcf" stroke-width="0.95" stroke-dasharray="2.6 2.0"/>
<line x1="285" y1="229.5" x2="1203" y2="229.5" stroke="#cfcfcf" stroke-width="0.95" stroke-dasharray="2.6 2.0"/>
<line x1="285" y1="250.1" x2="1203" y2="250.1" stroke="#cfcfcf" stroke-width="0.95" stroke-dasharray="2.6 2.0"/>
<line x1="285" y1="271.8" x2="1203" y2="271.8" stroke="#cfcfcf" stroke-width="0.95" stroke-dasharray="2.6 2.0"/>
<line x1="285" y1="357.6" x2="1203" y2="357.6" stroke="#8593a2" stroke-width="0.8" stroke-dasharray="2.2 2.3"/>
<polyline points="326.0,87.0 436.0,87.6 561.0,88.2 580.0,91.7 600.0,94.2 693.8,97.3 793.0,100.4 800.0,109.8 831.0,116.8 862.5,120.0 930.0,118.5 1000.0,117.6 1100.0,120.7 1187.5,121.5" fill="none" stroke="#c8783a" stroke-width="1.0" stroke-dasharray="1.6 1.6" stroke-linejoin="round" />
<polyline points="436.0,87.2 561.0,87.9 600.0,88.9 800.0,90.5 810.0,108.0 835.0,113.0" fill="none" stroke="#b8a0b8" stroke-width="0.9" stroke-dasharray="1.8 1.8" stroke-linejoin="round" />
<rect x="707.8" y="91.8" width="86" height="7" fill="none" stroke="#a0a0a8" stroke-width="0.8" stroke-dasharray="2 1.6"/>
<polyline points="285.0,122.0 308.8,114.5 321.0,117.0 334.0,115.8 357.5,116.8 371.0,121.2 384.0,119.5 407.5,120.0 420.0,120.5 432.5,118.0 458.8,118.0 471.0,121.2 482.5,123.8 495.0,125.8 507.5,126.2 520.0,123.8 532.5,119.5 545.0,122.5 557.5,118.8 570.0,125.0 582.5,127.0 600.0,127.3 632.5,128.8 645.0,128.8 656.0,130.0 669.0,124.5 681.0,126.2 695.0,125.0 707.5,123.8 731.0,122.0 744.0,122.5 756.0,127.0 769.0,126.2 781.0,124.5 794.0,123.0 806.0,123.0 831.0,122.5 856.0,122.5 880.0,121.5 920.0,121.0 982.0,118.8 1027.0,118.0 1065.0,117.0 1077.5,113.0 1140.0,113.0 1152.5,110.5 1177.5,112.0 1191.0,110.5" fill="none" stroke="#00b000" stroke-width="1.2" stroke-linejoin="round" />
<rect x="606.9" y="161.4" width="1.2" height="0.6" fill="#00c800"/>
<rect x="619.4" y="161.2" width="1.2" height="0.8" fill="#00c800"/>
<rect x="731.2" y="161.2" width="1.2" height="0.8" fill="#00c800"/>
<rect x="743.6" y="161.2" width="1.2" height="0.8" fill="#00c800"/>
<rect x="805.7" y="159.7" width="1.2" height="2.3" fill="#00c800"/>
<rect x="818.1" y="155.0" width="1.2" height="7.0" fill="#00c800"/>
<rect x="830.5" y="159.2" width="1.2" height="2.8" fill="#00c800"/>
<rect x="842.9" y="161.2" width="1.2" height="0.8" fill="#00c800"/>
<rect x="855.4" y="161.2" width="1.2" height="0.8" fill="#00c800"/>
<rect x="867.8" y="160.5" width="1.2" height="1.5" fill="#00c800"/>
<rect x="880.2" y="160.5" width="1.2" height="1.5" fill="#00c800"/>
<rect x="892.6" y="160.8" width="1.2" height="1.2" fill="#00c800"/>
<rect x="905.0" y="157.4" width="1.2" height="4.6" fill="#00c800"/>
<rect x="917.5" y="158.4" width="1.2" height="3.6" fill="#00c800"/>
<rect x="929.9" y="158.1" width="1.2" height="3.9" fill="#00c800"/>
<rect x="942.3" y="160.0" width="1.2" height="2.0" fill="#00c800"/>
<rect x="954.7" y="160.8" width="1.2" height="1.2" fill="#00c800"/>
<rect x="967.2" y="160.0" width="1.2" height="2.0" fill="#00c800"/>
<rect x="979.6" y="159.7" width="1.2" height="2.3" fill="#00c800"/>
<rect x="992.0" y="160.5" width="1.2" height="1.5" fill="#00c800"/>
<rect x="1004.4" y="158.1" width="1.2" height="3.9" fill="#00c800"/>
<rect x="1016.8" y="161.5" width="1.2" height="0.5" fill="#00c800"/>
<rect x="1029.3" y="160.5" width="1.2" height="1.5" fill="#00c800"/>
<rect x="1041.7" y="159.7" width="1.2" height="2.3" fill="#00c800"/>
<rect x="1054.1" y="160.1" width="1.2" height="1.9" fill="#00c800"/>
<rect x="1066.5" y="158.6" width="1.2" height="3.4" fill="#00c800"/>
<rect x="1078.9" y="159.2" width="1.2" height="2.8" fill="#00c800"/>
<rect x="1091.4" y="159.7" width="1.2" height="2.3" fill="#00c800"/>
<rect x="1103.8" y="161.4" width="1.2" height="0.6" fill="#00c800"/>
<rect x="1116.2" y="161.5" width="1.2" height="0.5" fill="#00c800"/>
<rect x="1128.6" y="161.5" width="1.2" height="0.5" fill="#00c800"/>
<rect x="1141.0" y="161.4" width="1.2" height="0.6" fill="#00c800"/>
<rect x="1153.5" y="161.5" width="1.2" height="0.5" fill="#00c800"/>
<rect x="1165.9" y="161.5" width="1.2" height="0.5" fill="#00c800"/>
<rect x="1178.3" y="161.6" width="1.2" height="0.4" fill="#00c800"/>
<rect x="284.9" y="97.8" width="3.5" height="2.0" fill="#1cf01c"/>
<rect x="292.8" y="98.4" width="8.4" height="2.0" fill="#1cf01c"/>
<rect x="305.2" y="99" width="8.4" height="2.0" fill="#1cf01c"/>
<rect x="317.7" y="99.6" width="8.4" height="2.0" fill="#1cf01c"/>
<rect x="330.1" y="100.2" width="8.4" height="2.0" fill="#1cf01c"/>
<rect x="342.5" y="100.8" width="8.4" height="2.0" fill="#1cf01c"/>
<rect x="354.9" y="101.3" width="8.4" height="2.0" fill="#1cf01c"/>
<rect x="367.3" y="101.8" width="8.4" height="2.0" fill="#1cf01c"/>
<rect x="379.8" y="102.2" width="8.4" height="2.0" fill="#1cf01c"/>
<rect x="392.2" y="102.6" width="8.4" height="2.0" fill="#1cf01c"/>
<rect x="404.6" y="103" width="8.4" height="2.0" fill="#1cf01c"/>
<rect x="417.0" y="103.3" width="8.4" height="2.0" fill="#1cf01c"/>
<rect x="429.5" y="103.6" width="8.4" height="2.0" fill="#1cf01c"/>
<rect x="441.9" y="103.8" width="8.4" height="2.0" fill="#1cf01c"/>
<rect x="454.3" y="104" width="8.4" height="2.0" fill="#1cf01c"/>
<rect x="466.7" y="104" width="8.4" height="2.0" fill="#1cf01c"/>
<rect x="479.1" y="104" width="8.4" height="20.5" fill="#fff" stroke="#18e818" stroke-width="0.9"/>
<rect x="491.6" y="113" width="8.4" height="9.0" fill="#fff" stroke="#18e818" stroke-width="0.9"/>
<line x1="508.2" y1="99.5" x2="508.2" y2="134" stroke="#00d800" stroke-width="1"/>
<rect x="504.0" y="122" width="8.4" height="2.0" fill="#1cf01c"/>
<line x1="520.6" y1="93" x2="520.6" y2="148.75" stroke="#00d800" stroke-width="1"/>
<rect x="516.4" y="111.25" width="8.4" height="12.5" fill="#000" stroke="#00d800" stroke-width="1"/>
<rect x="529.6" y="110.3" width="6.800000000000001" height="1.4" fill="#0a7a0a"/>
<line x1="545.4" y1="122" x2="545.4" y2="150.6" stroke="#00d800" stroke-width="1"/>
<rect x="541.2" y="122" width="8.4" height="8.0" fill="#000" stroke="#00d800" stroke-width="1"/>
<rect x="553.7" y="104" width="8.4" height="2.0" fill="#1cf01c"/>
<rect x="566.1" y="108.7" width="8.4" height="2.0" fill="#1cf01c"/>
<rect x="578.5" y="109.5" width="8.4" height="2.0" fill="#1cf01c"/>
<rect x="590.9" y="109.7" width="8.4" height="4.7" fill="#fff" stroke="#18e818" stroke-width="0.9"/>
<rect x="604.1" y="121" width="6.800000000000001" height="2.0" fill="#0a7a0a"/>
<rect x="616.6" y="117.5" width="6.800000000000001" height="2.0" fill="#0a7a0a"/>
<line x1="632.4" y1="104" x2="632.4" y2="117" stroke="#00d800" stroke-width="1"/>
<rect x="628.2" y="105" width="8.4" height="10.0" fill="#fff" stroke="#18e818" stroke-width="0.9"/>
<line x1="644.8" y1="114" x2="644.8" y2="119" stroke="#00d800" stroke-width="1"/>
<rect x="640.6" y="114.5" width="8.4" height="3.0" fill="#fff" stroke="#18e818" stroke-width="0.9"/>
<rect x="653.0" y="117" width="8.4" height="1.5" fill="#1cf01c"/>
<rect x="665.5" y="116" width="8.4" height="2.0" fill="#1cf01c"/>
<rect x="677.9" y="116.2" width="8.4" height="1.8" fill="#1cf01c"/>
<rect x="690.3" y="117.5" width="8.4" height="4.5" fill="#fff" stroke="#18e818" stroke-width="0.9"/>
<rect x="702.7" y="119.8" width="8.4" height="2.4" fill="#000" stroke="#00d800" stroke-width="1"/>
<rect x="715.1" y="119.6" width="8.4" height="1.6" fill="#1cf01c"/>
<rect x="727.6" y="119.6" width="8.4" height="1.8" fill="#1cf01c"/>
<rect x="740.0" y="119.8" width="8.4" height="1.6" fill="#1cf01c"/>
<rect x="752.4" y="119.2" width="8.4" height="2.3" fill="#000" stroke="#00d800" stroke-width="1"/>
<rect x="765.6" y="118.4" width="6.800000000000001" height="1.2" fill="#0a7a0a"/>
<rect x="778.0" y="118.4" width="6.800000000000001" height="1.2" fill="#0a7a0a"/>
<rect x="789.7" y="117.8" width="8.4" height="4.8" fill="#fff" stroke="#18e818" stroke-width="0.9"/>
<rect x="802.1" y="123" width="8.4" height="1.6" fill="#1cf01c"/>
<line x1="818.7" y1="123.5" x2="818.7" y2="129" stroke="#00d800" stroke-width="1"/>
<rect x="814.5" y="124.5" width="8.4" height="3.0" fill="#fff" stroke="#18e818" stroke-width="0.9"/>
<line x1="831.1" y1="124.5" x2="831.1" y2="129.5" stroke="#00d800" stroke-width="1"/>
<rect x="826.9" y="125.3" width="8.4" height="2.7" fill="#fff" stroke="#18e818" stroke-width="0.9"/>
<rect x="839.3" y="123.8" width="8.4" height="4.0" fill="#000" stroke="#109060" stroke-width="1"/>
<rect x="851.8" y="121.5" width="8.4" height="5.0" fill="#000" stroke="#109060" stroke-width="1"/>
<line x1="868.4" y1="119" x2="868.4" y2="126" stroke="#00d800" stroke-width="1"/>
<rect x="864.2" y="120" width="8.4" height="5.0" fill="#fff" stroke="#18e818" stroke-width="0.9"/>
<rect x="876.6" y="119.6" width="8.4" height="4.4" fill="#000" stroke="#00d800" stroke-width="1"/>
<line x1="893.2" y1="118.5" x2="893.2" y2="128" stroke="#00d800" stroke-width="1"/>
<rect x="889.0" y="119.5" width="8.4" height="6.5" fill="#fff" stroke="#18e818" stroke-width="0.9"/>
<line x1="905.6" y1="124" x2="905.6" y2="129" stroke="#00d800" stroke-width="1"/>
<rect x="901.4" y="125" width="8.4" height="3.0" fill="#fff" stroke="#18e818" stroke-width="0.9"/>
<line x1="918.1" y1="125" x2="918.1" y2="131" stroke="#00d800" stroke-width="1"/>
<rect x="913.9" y="127.75" width="8.4" height="1.6" fill="#00d800"/>
<line x1="930.5" y1="125.4" x2="930.5" y2="133.7" stroke="#00d800" stroke-width="1"/>
<rect x="926.3" y="127.5" width="8.4" height="2.5" fill="#00d800"/>
<line x1="942.9" y1="125" x2="942.9" y2="134" stroke="#00d800" stroke-width="1"/>
<rect x="938.7" y="127" width="8.4" height="2.0" fill="#00d800"/>
<rect x="951.1" y="127" width="8.4" height="2.6" fill="#fff" stroke="#18e818" stroke-width="0.9"/>
<line x1="967.8" y1="125" x2="967.8" y2="131" stroke="#00d800" stroke-width="1"/>
<rect x="963.6" y="128.2" width="8.4" height="1.6" fill="#00d800"/>
<rect x="976.0" y="129.3" width="8.4" height="1.6" fill="#00d800"/>
<rect x="988.4" y="125" width="8.4" height="6.0" fill="#000" stroke="#00d800" stroke-width="1"/>
<rect x="1000.8" y="124.3" width="8.4" height="3.7" fill="#fff" stroke="#18e818" stroke-width="0.9"/>
<rect x="1014.0" y="125.3" width="6.800000000000001" height="1.2" fill="#c07830"/>
<rect x="1026.5" y="124.6" width="6.800000000000001" height="1.0" fill="#c07830"/>
<line x1="1042.3" y1="119.2" x2="1042.3" y2="124.3" stroke="#00d800" stroke-width="1"/>
<rect x="1038.1" y="123" width="8.4" height="1.3" fill="#00d800"/>
<rect x="1050.5" y="122" width="8.4" height="1.8" fill="#00d800"/>
<rect x="1062.9" y="120.7" width="8.4" height="2.3" fill="#00d800"/>
<rect x="1075.3" y="121.5" width="8.4" height="6.5" fill="#fff" stroke="#18e818" stroke-width="0.9"/>
<rect x="1087.8" y="127" width="8.4" height="1.5" fill="#00d800"/>
<rect x="1100.2" y="125" width="8.4" height="3.5" fill="#000" stroke="#00d800" stroke-width="1"/>
<rect x="1113.4" y="123.8" width="6.800000000000001" height="1.2" fill="#c07830"/>
<rect x="1125.8" y="123.8" width="6.800000000000001" height="1.2" fill="#c07830"/>
<rect x="1138.2" y="123.6" width="6.800000000000001" height="1.2" fill="#c07830"/>
<rect x="1150.7" y="123.6" width="6.800000000000001" height="1.2" fill="#c07830"/>
<rect x="1163.1" y="123.6" width="6.800000000000001" height="1.2" fill="#c07830"/>
<rect x="1175.5" y="123.2" width="6.800000000000001" height="1.2" fill="#c07830"/>
<rect x="1187.1" y="122.3" width="5.6" height="2.7" fill="#fff" stroke="#18e818" stroke-width="0.9"/>
<text x="319.8" y="96.6" font-size="7.2" fill="#d2d2d2" stroke="#d2d2d2" stroke-width="0.22" text-anchor="start" textLength="46.0" lengthAdjust="spacingAndGlyphs">XAUUSD, M1:</text>
<text x="368" y="96.6" font-size="7.2" fill="#d2d2d2" stroke="#d2d2d2" stroke-width="0.22" text-anchor="start" textLength="57.3" lengthAdjust="spacingAndGlyphs">Gold vs US Dollar</text>
<text x="427.5" y="96.6" font-size="7.2" fill="#d2d2d2" stroke="#d2d2d2" stroke-width="0.22" text-anchor="start" textLength="29.5" lengthAdjust="spacingAndGlyphs">4323.243</text>
<text x="459.2" y="96.6" font-size="7.2" fill="#d2d2d2" stroke="#d2d2d2" stroke-width="0.22" text-anchor="start" textLength="31.0" lengthAdjust="spacingAndGlyphs">4323.624</text>
<text x="492.4" y="96.6" font-size="7.2" fill="#d2d2d2" stroke="#d2d2d2" stroke-width="0.22" text-anchor="start" textLength="30.4" lengthAdjust="spacingAndGlyphs">4321.649</text>
<text x="525" y="96.6" font-size="7.2" fill="#d2d2d2" stroke="#d2d2d2" stroke-width="0.22" text-anchor="start" textLength="31.6" lengthAdjust="spacingAndGlyphs">4322.252</text>
<text x="558.8" y="96.6" font-size="7.2" fill="#d2d2d2" stroke="#d2d2d2" stroke-width="0.22" text-anchor="start" textLength="11.6" lengthAdjust="spacingAndGlyphs">182</text>
<polyline points="285.0,91.6 380.0,94.5 436.0,97.2 467.0,98.8 476.6,105.0 483.0,109.0 501.6,111.0 511.0,116.7 520.0,121.2 540.0,122.3 800.0,122.2 835.0,124.0 845.0,127.7 855.0,127.7 866.0,117.8 900.0,118.2 1000.0,124.5 1100.0,125.8 1190.0,126.2" fill="none" stroke="#0000d0" stroke-width="1.4" stroke-linejoin="round" />
<polyline points="285.0,91.9 380.0,94.8 436.0,96.9 467.0,98.4 476.6,104.6 483.0,108.0 501.6,110.5 511.0,116.0 520.0,121.0 545.0,122.3 600.0,122.3" fill="none" stroke="#7a00b0" stroke-width="1.4" stroke-linejoin="round" />
<polyline points="472.0,104.4 483.0,112.0 501.6,115.2 511.0,119.0 521.0,121.6" fill="none" stroke="#e00000" stroke-width="1.1" stroke-linejoin="round" />
<polyline points="285.0,94.8 380.0,99.0 436.0,101.0 472.0,103.4 483.0,111.0 530.0,111.0 561.0,113.6 592.0,115.0 615.6,120.7 631.0,127.0 644.5,127.0 654.7,112.9 693.8,114.5 732.8,114.5 740.6,117.6 800.0,120.8 900.0,124.0 1000.0,127.5 1100.0,126.2 1190.0,124.8" fill="none" stroke="#e80000" stroke-width="1.6" stroke-linejoin="round" />
<polyline points="285.0,91.8 380.0,95.0 436.0,96.4 475.0,99.5 530.0,102.6 592.0,105.0 636.0,107.3 662.0,109.5 725.0,112.7 800.0,115.5 900.0,118.8 1000.0,121.3 1100.0,122.3 1190.0,123.3" fill="none" stroke="#e80000" stroke-width="1.2" stroke-linejoin="round" />
<rect x="288.5" y="89.9" width="5.3" height="7.6" fill="#f9c4c4" stroke="#e24848" stroke-width="0.9"/><rect x="293.9" y="89.9" width="5.3" height="7.6" fill="#b4d6f6" stroke="#3a86d6" stroke-width="0.9"/><path d="M289 92.3H298.8M289 94.9H298.8" stroke="#fff" stroke-width="0.8"/>
<path d="M304.8 90H307.8V93.4H310.2V97.5H304.8Z" fill="#f9c4c4" stroke="#e24848" stroke-width="0.9"/><path d="M315.6 90H312.8V93.4H310.6V97.5H315.6Z" fill="#b4d6f6" stroke="#3a86d6" stroke-width="0.9"/><rect x="308.6" y="90" width="3.4" height="1.4" fill="#fff"/>
<text x="289.6" y="110" font-size="7.2" fill="#d2d2d2" stroke="#d2d2d2" stroke-width="0.22" text-anchor="start" textLength="53.8" lengthAdjust="spacingAndGlyphs">Destroyer X7 [=;</text>
<text x="345.6" y="110" font-size="7.2" fill="#d2d2d2" stroke="#d2d2d2" stroke-width="0.22" text-anchor="start" textLength="72.2" lengthAdjust="spacingAndGlyphs">Magic_Number=9196;</text>
<text x="420" y="110" font-size="7.2" fill="#d2d2d2" stroke="#d2d2d2" stroke-width="0.22" text-anchor="start" textLength="35.4" lengthAdjust="spacingAndGlyphs">Lots=0.01;</text>
<text x="457.6" y="110" font-size="7.2" fill="#d2d2d2" stroke="#d2d2d2" stroke-width="0.22" text-anchor="start" textLength="97.8" lengthAdjust="spacingAndGlyphs">Delay_time_to_open_order=2;</text>
<text x="557.6" y="110" font-size="7.2" fill="#d2d2d2" stroke="#d2d2d2" stroke-width="0.22" text-anchor="start" textLength="67.2" lengthAdjust="spacingAndGlyphs">Delay_After_TP=30;</text>
<text x="627" y="110" font-size="7.2" fill="#d2d2d2" stroke="#d2d2d2" stroke-width="0.22" text-anchor="start" textLength="8.4" lengthAdjust="spacingAndGlyphs">=;</text>
<text x="637.6" y="110" font-size="7.2" fill="#d2d2d2" stroke="#d2d2d2" stroke-width="0.22" text-anchor="start" textLength="54.0" lengthAdjust="spacingAndGlyphs">Using_DCA=true;</text>
<text x="693.8" y="110" font-size="7.2" fill="#d2d2d2" stroke="#d2d2d2" stroke-width="0.22" text-anchor="start" textLength="64.0" lengthAdjust="spacingAndGlyphs">DCA_Multiplier=1.3;</text>
<text x="760" y="110" font-size="7.2" fill="#d2d2d2" stroke="#d2d2d2" stroke-width="0.22" text-anchor="start" textLength="62.8" lengthAdjust="spacingAndGlyphs">DCA_Distance=5.0;</text>
<text x="825" y="110" font-size="7.2" fill="#d2d2d2" stroke="#d2d2d2" stroke-width="0.22" text-anchor="start" textLength="71.6" lengthAdjust="spacingAndGlyphs">Max_DCA_Orders=10;</text>
<text x="898.8" y="110" font-size="7.2" fill="#d2d2d2" stroke="#d2d2d2" stroke-width="0.22" text-anchor="start" textLength="8.6" lengthAdjust="spacingAndGlyphs">=;</text>
<text x="909.6" y="110" font-size="7.2" fill="#d2d2d2" stroke="#d2d2d2" stroke-width="0.22" text-anchor="start" textLength="73.7" lengthAdjust="spacingAndGlyphs">TP_Dollar_Profit=10.0;</text>
<text x="985.5" y="110" font-size="7.2" fill="#d2d2d2" stroke="#d2d2d2" stroke-width="0.22" text-anchor="start" textLength="7.3" lengthAdjust="spacingAndGlyphs">=;</text>
<text x="995" y="110" font-size="7.2" fill="#d2d2d2" stroke="#d2d2d2" stroke-width="0.22" text-anchor="start" textLength="52.8" lengthAdjust="spacingAndGlyphs">Signal_Mode=3;</text>
<text x="1050" y="110" font-size="7.2" fill="#d2d2d2" stroke="#d2d2d2" stroke-width="0.22" text-anchor="start" textLength="75.4" lengthAdjust="spacingAndGlyphs">Use_Trend_Filter=true;</text>
<text x="1127.6" y="110" font-size="7.2" fill="#d2d2d2" stroke="#d2d2d2" stroke-width="0.22" text-anchor="start" textLength="57.6" lengthAdjust="spacingAndGlyphs">Trend_TF=16385;</text>
<text x="1187.4" y="110" font-size="7.2" fill="#d2d2d2" stroke="#d2d2d2" stroke-width="0.22" text-anchor="start" textLength="12.0" lengthAdjust="spacingAndGlyphs">Use_</text>
<polyline points="285.0,187.5 296.0,188.0 309.0,185.0 334.0,183.8 357.5,183.2 395.0,184.5 420.0,182.5 445.0,180.8 471.0,179.5 483.0,198.0 495.0,190.0 520.0,182.5 532.5,178.2 545.0,186.2 557.5,173.8 570.0,175.8 582.5,175.0 595.0,176.2 600.0,178.8 607.5,181.2 632.5,175.0 645.0,176.2 657.5,175.8 682.5,177.5 720.0,180.8 745.0,180.0 770.0,176.2 782.5,178.0 807.5,185.0 830.0,188.2 855.0,176.2 867.5,177.5 880.0,175.0 892.5,180.0 905.0,182.5 920.0,181.2 930.0,183.0 942.5,182.5 955.0,179.5 967.5,180.0 980.0,183.2 992.5,175.8 1005.0,175.0 1017.5,176.2 1030.0,171.2 1042.5,167.0 1055.0,168.0 1067.5,167.0 1080.0,174.5 1092.5,177.5 1105.0,175.8 1117.5,173.2 1140.0,172.5 1153.8,177.0 1166.0,175.0 1178.8,172.0 1191.0,173.2" fill="none" stroke="#2e8f8f" stroke-width="1.15" stroke-linejoin="round" />
<polyline points="285.0,232.5 309.0,233.0 334.0,233.8 357.5,234.5 382.5,236.0 407.5,236.0 420.0,235.0 445.0,234.5 459.0,233.0 471.0,233.0 483.0,238.8 495.0,234.5 507.5,235.0 520.0,225.0 532.5,225.0 545.0,228.2 557.5,220.8 570.0,223.0 582.5,223.0 600.0,225.0 607.5,226.2 632.5,223.0 645.0,223.8 682.5,223.8 695.0,225.0 757.5,223.8 782.5,223.8 807.5,226.2 830.0,227.5 855.0,222.5 867.5,224.5 880.0,221.2 892.5,223.8 920.0,225.0 942.5,224.2 980.0,226.2 992.5,222.0 1005.0,223.8 1030.0,222.0 1042.5,220.5 1067.5,219.5 1080.0,223.8 1092.5,223.8 1117.5,221.8 1140.0,220.8 1153.8,222.5 1178.8,220.8 1191.0,221.5" fill="none" stroke="#1c5fb0" stroke-width="1.25" stroke-linejoin="round" />
<polyline points="285.0,277.5 332.5,277.5 345.0,273.8 357.5,273.8 370.0,275.0 382.5,277.0 407.5,277.0 420.0,274.5 432.5,272.0 445.0,269.5 457.5,267.0 470.0,265.5 483.0,276.8 495.0,275.8 507.5,272.0 520.0,261.2 532.5,256.2 545.0,255.0 557.5,253.8 570.0,252.5 582.5,249.5 595.0,250.0 600.0,250.0 607.5,252.0 620.0,260.0 632.5,270.5 645.0,266.2 657.5,264.5 670.0,268.0 682.5,270.5 695.0,274.2 707.5,272.0 720.0,268.8 732.5,263.0 745.0,261.2 757.5,256.2 770.0,252.5 781.2,246.2 793.8,257.0 807.5,267.0 818.8,272.0 831.2,270.5 843.8,267.0 855.0,259.5 867.5,255.0 880.0,248.0 892.5,254.5 905.0,258.0 917.5,268.0 930.0,268.0 942.5,265.8 955.0,264.2 967.5,263.8 980.0,265.0 992.5,261.2 1005.0,260.0 1017.5,257.0 1030.0,258.0 1042.5,255.0 1055.0,253.0 1067.5,253.0 1080.0,259.5 1092.5,266.2 1104.5,270.0 1117.5,264.5 1130.0,258.8 1141.2,255.0 1153.8,257.0 1166.2,255.5 1178.8,255.5 1190.8,252.0" fill="none" stroke="#2aa198" stroke-width="1.15" stroke-linejoin="round" />
<polyline points="285.0,278.2 332.5,278.0 345.0,276.2 357.5,274.5 370.0,274.5 382.5,276.2 407.5,277.5 420.0,276.2 432.5,273.8 445.0,272.0 457.5,269.5 470.0,267.0 483.0,270.0 495.0,272.5 507.5,274.5 520.0,269.5 532.5,263.0 545.0,257.5 557.5,255.5 570.0,253.8 582.5,251.2 595.0,250.5 600.0,250.0 607.5,250.5 620.0,253.8 632.5,261.2 645.0,265.0 657.5,266.2 682.5,267.0 695.0,271.2 707.5,272.0 720.0,271.2 732.5,268.0 745.0,264.5 757.5,260.5 770.0,257.0 781.2,252.0 793.8,251.2 807.5,257.5 818.8,265.0 831.2,270.5 843.8,270.5 855.0,266.2 867.5,260.5 880.0,253.8 892.5,251.2 905.0,253.8 917.5,260.0 930.0,265.5 942.5,267.0 955.0,265.5 980.0,264.2 1005.0,262.0 1017.5,259.5 1030.0,258.2 1042.5,256.2 1055.0,255.0 1067.5,254.2 1080.0,256.2 1092.5,260.0 1104.5,265.0 1117.5,266.2 1130.0,263.8 1141.2,260.0 1153.8,257.5 1166.2,256.2 1178.8,255.8 1190.8,254.5" fill="none" stroke="#e01818" stroke-width="1.1" stroke-dasharray="1.5 1.7" stroke-linejoin="round" />
<polyline points="285.0,298.8 297.5,296.8 308.8,295.8 345.0,295.8 357.5,297.0 370.0,297.0 382.5,298.2 395.0,299.2 407.5,299.2 420.0,298.8 432.5,299.2 445.0,297.5 457.5,295.8 470.5,295.8 483.0,314.2 495.0,310.5 507.5,312.0 520.0,300.8 532.5,300.0 545.0,309.5 557.5,293.0 570.0,296.8 582.5,296.8 595.0,300.8 600.0,303.8 607.5,307.5 620.0,304.5 632.5,300.0 645.0,302.0 657.0,283.2 669.5,287.0 681.2,285.0 694.5,300.0 707.0,298.8 718.8,289.5 732.0,305.0 744.5,300.0 757.0,298.8 768.8,295.0 781.2,287.0 793.8,293.8 806.2,299.5 818.8,299.5 831.2,301.2 843.8,298.0 855.0,294.2 867.5,292.5 880.0,290.5 892.5,296.2 905.0,297.5 920.0,298.8 942.5,299.2 955.0,300.5 967.5,297.0 980.0,297.0 992.5,289.5 1005.0,290.5 1017.5,293.0 1030.0,295.0 1042.0,290.5 1055.0,293.8 1067.0,287.5 1080.0,290.5 1092.5,289.5 1105.0,288.2 1117.5,288.2 1130.0,286.8 1141.2,285.8 1153.8,286.8 1166.2,289.5 1178.8,287.5 1190.8,289.0" fill="none" stroke="#1c5fb0" stroke-width="1.25" stroke-linejoin="round" />
<polyline points="285.0,353.0 382.5,353.0 395.0,353.8 470.0,353.8 483.0,350.0 495.0,348.8 507.5,343.8 520.0,337.0 532.5,337.0 545.0,332.0 557.5,329.2 570.0,328.5 582.5,329.2 600.0,328.0 620.0,327.0 632.5,325.5 645.0,324.5 670.0,323.8 695.0,323.0 720.0,323.0 732.5,322.0 745.0,325.0 757.5,326.2 768.8,329.5 781.2,337.0 793.8,336.2 806.2,341.8 818.8,342.5 843.8,342.5 855.0,341.8 867.5,342.5 880.0,341.8 892.5,342.5 920.0,340.8 942.5,339.2 980.0,338.2 1005.0,337.0 1042.5,336.2 1080.0,336.2 1130.0,337.0 1155.0,338.2 1178.8,340.0 1190.8,341.0" fill="none" stroke="#20988c" stroke-width="1.15" stroke-linejoin="round" />
<line x1="297.0" y1="369.8" x2="297.0" y2="377" stroke="#bdbdbd" stroke-width="0.95"/>
<line x1="309.4" y1="369.8" x2="309.4" y2="377" stroke="#bdbdbd" stroke-width="0.95"/>
<line x1="321.9" y1="369.8" x2="321.9" y2="377.5" stroke="#bdbdbd" stroke-width="0.95"/>
<line x1="334.3" y1="369.8" x2="334.3" y2="378" stroke="#bdbdbd" stroke-width="0.95"/>
<line x1="346.7" y1="369.8" x2="346.7" y2="378" stroke="#bdbdbd" stroke-width="0.95"/>
<line x1="359.1" y1="369.8" x2="359.1" y2="378.5" stroke="#bdbdbd" stroke-width="0.95"/>
<line x1="371.5" y1="369.8" x2="371.5" y2="380" stroke="#ffffff" stroke-width="0.95"/>
<line x1="384.0" y1="369.8" x2="384.0" y2="379" stroke="#bdbdbd" stroke-width="0.95"/>
<line x1="396.4" y1="360" x2="396.4" y2="381.25" stroke="#bdbdbd" stroke-width="0.95"/>
<line x1="408.8" y1="360" x2="408.8" y2="382.5" stroke="#ffffff" stroke-width="0.95"/>
<line x1="421.2" y1="360" x2="421.2" y2="381.25" stroke="#bdbdbd" stroke-width="0.95"/>
<line x1="433.7" y1="360" x2="433.7" y2="382" stroke="#bdbdbd" stroke-width="0.95"/>
<line x1="446.1" y1="360" x2="446.1" y2="382" stroke="#ffffff" stroke-width="0.95"/>
<line x1="458.5" y1="360" x2="458.5" y2="382" stroke="#bdbdbd" stroke-width="0.95"/>
<line x1="470.9" y1="360" x2="470.9" y2="381.25" stroke="#bdbdbd" stroke-width="0.95"/>
<line x1="483.3" y1="360" x2="483.3" y2="390" stroke="#ffffff" stroke-width="0.95"/>
<line x1="495.8" y1="360" x2="495.8" y2="396.25" stroke="#bdbdbd" stroke-width="0.95"/>
<line x1="508.2" y1="360" x2="508.2" y2="403.5" stroke="#bdbdbd" stroke-width="0.95"/>
<line x1="520.6" y1="360" x2="520.6" y2="398.75" stroke="#ffffff" stroke-width="0.95"/>
<line x1="533.0" y1="360" x2="533.0" y2="393" stroke="#bdbdbd" stroke-width="0.95"/>
<line x1="545.4" y1="360" x2="545.4" y2="400" stroke="#bdbdbd" stroke-width="0.95"/>
<line x1="557.9" y1="360" x2="557.9" y2="393.75" stroke="#ffffff" stroke-width="0.95"/>
<line x1="570.3" y1="360" x2="570.3" y2="390" stroke="#bdbdbd" stroke-width="0.95"/>
<line x1="582.7" y1="360" x2="582.7" y2="387.5" stroke="#bdbdbd" stroke-width="0.95"/>
<line x1="595.1" y1="360" x2="595.1" y2="386.25" stroke="#bdbdbd" stroke-width="0.95"/>
<line x1="607.5" y1="360" x2="607.5" y2="391.25" stroke="#ffffff" stroke-width="0.95"/>
<line x1="620.0" y1="360" x2="620.0" y2="391" stroke="#bdbdbd" stroke-width="0.95"/>
<line x1="632.4" y1="360" x2="632.4" y2="389.5" stroke="#bdbdbd" stroke-width="0.95"/>
<line x1="644.8" y1="360" x2="644.8" y2="388" stroke="#ffffff" stroke-width="0.95"/>
<line x1="657.2" y1="360" x2="657.2" y2="389.5" stroke="#bdbdbd" stroke-width="0.95"/>
<line x1="669.7" y1="360" x2="669.7" y2="386.25" stroke="#bdbdbd" stroke-width="0.95"/>
<line x1="682.1" y1="360" x2="682.1" y2="385" stroke="#bdbdbd" stroke-width="0.95"/>
<line x1="694.5" y1="360" x2="694.5" y2="386.25" stroke="#ffffff" stroke-width="0.95"/>
<line x1="706.9" y1="360" x2="706.9" y2="386.25" stroke="#bdbdbd" stroke-width="0.95"/>
<line x1="719.3" y1="360" x2="719.3" y2="386.25" stroke="#bdbdbd" stroke-width="0.95"/>
<line x1="731.8" y1="360" x2="731.8" y2="385" stroke="#ffffff" stroke-width="0.95"/>
<line x1="744.2" y1="360" x2="744.2" y2="385.5" stroke="#bdbdbd" stroke-width="0.95"/>
<line x1="756.6" y1="360" x2="756.6" y2="384.5" stroke="#bdbdbd" stroke-width="0.95"/>
<line x1="769.0" y1="360" x2="769.0" y2="382.5" stroke="#bdbdbd" stroke-width="0.95"/>
<line x1="781.4" y1="360" x2="781.4" y2="382" stroke="#ffffff" stroke-width="0.95"/>
<line x1="793.9" y1="360" x2="793.9" y2="382" stroke="#bdbdbd" stroke-width="0.95"/>
<line x1="806.3" y1="360" x2="806.3" y2="383.75" stroke="#bdbdbd" stroke-width="0.95"/>
<line x1="818.7" y1="360" x2="818.7" y2="383.75" stroke="#bdbdbd" stroke-width="0.95"/>
<line x1="831.1" y1="360" x2="831.1" y2="385" stroke="#bdbdbd" stroke-width="0.95"/>
<line x1="843.5" y1="360" x2="843.5" y2="385.5" stroke="#ffffff" stroke-width="0.95"/>
<line x1="856.0" y1="360" x2="856.0" y2="384.5" stroke="#bdbdbd" stroke-width="0.95"/>
<line x1="868.4" y1="360" x2="868.4" y2="382" stroke="#bdbdbd" stroke-width="0.95"/>
<line x1="880.8" y1="360" x2="880.8" y2="380.5" stroke="#bdbdbd" stroke-width="0.95"/>
<line x1="893.2" y1="360" x2="893.2" y2="379.5" stroke="#ffffff" stroke-width="0.95"/>
<line x1="905.6" y1="360" x2="905.6" y2="380" stroke="#bdbdbd" stroke-width="0.95"/>
<line x1="918.1" y1="360" x2="918.1" y2="380" stroke="#bdbdbd" stroke-width="0.95"/>
<line x1="930.5" y1="360" x2="930.5" y2="383" stroke="#ffffff" stroke-width="0.95"/>
<line x1="942.9" y1="360" x2="942.9" y2="382" stroke="#bdbdbd" stroke-width="0.95"/>
<line x1="955.3" y1="360" x2="955.3" y2="382" stroke="#bdbdbd" stroke-width="0.95"/>
<line x1="967.8" y1="360" x2="967.8" y2="383" stroke="#bdbdbd" stroke-width="0.95"/>
<line x1="980.2" y1="360" x2="980.2" y2="384.5" stroke="#bdbdbd" stroke-width="0.95"/>
<line x1="992.6" y1="360" x2="992.6" y2="381.25" stroke="#ffffff" stroke-width="0.95"/>
<line x1="1005.0" y1="360" x2="1005.0" y2="381.25" stroke="#bdbdbd" stroke-width="0.95"/>
<line x1="1017.4" y1="360" x2="1017.4" y2="378" stroke="#bdbdbd" stroke-width="0.95"/>
<line x1="1029.9" y1="360" x2="1029.9" y2="376.25" stroke="#bdbdbd" stroke-width="0.95"/>
<line x1="1042.3" y1="360" x2="1042.3" y2="372.5" stroke="#bdbdbd" stroke-width="0.95"/>
<line x1="1054.7" y1="360" x2="1054.7" y2="371.25" stroke="#ffffff" stroke-width="0.95"/>
<line x1="1067.1" y1="360" x2="1067.1" y2="367.5" stroke="#bdbdbd" stroke-width="0.95"/>
<line x1="1079.5" y1="360" x2="1079.5" y2="368" stroke="#bdbdbd" stroke-width="0.95"/>
<line x1="1092.0" y1="360" x2="1092.0" y2="368.75" stroke="#bdbdbd" stroke-width="0.95"/>
<line x1="1104.4" y1="360" x2="1104.4" y2="370" stroke="#ffffff" stroke-width="0.95"/>
<line x1="1116.8" y1="360" x2="1116.8" y2="366.25" stroke="#bdbdbd" stroke-width="0.95"/>
<line x1="1129.2" y1="360" x2="1129.2" y2="366.25" stroke="#bdbdbd" stroke-width="0.95"/>
<line x1="1141.6" y1="360" x2="1141.6" y2="363.75" stroke="#bdbdbd" stroke-width="0.95"/>
<line x1="1154.1" y1="360" x2="1154.1" y2="363" stroke="#bdbdbd" stroke-width="0.95"/>
<line x1="1166.5" y1="360" x2="1166.5" y2="362.5" stroke="#bdbdbd" stroke-width="0.95"/>
<line x1="1178.9" y1="360" x2="1178.9" y2="362" stroke="#bdbdbd" stroke-width="0.95"/>
<line x1="1191.3" y1="360" x2="1191.3" y2="361.25" stroke="#bdbdbd" stroke-width="0.95"/>
<polyline points="285.0,377.5 345.0,377.5 382.5,379.2 420.0,380.5 470.0,381.8 495.0,384.2 520.0,388.8 545.0,391.8 570.0,393.8 600.0,394.2 620.0,392.5 632.5,391.2 657.5,388.8 682.5,388.0 732.5,387.5 757.5,386.2 782.5,385.0 832.5,384.2 857.5,383.8 882.5,383.0 920.0,383.0 980.0,382.0 1005.0,382.0 1030.0,380.5 1055.0,377.5 1080.0,375.0 1105.0,372.0 1130.0,369.5 1155.0,367.5 1178.8,365.5 1190.8,364.5" fill="none" stroke="#e01010" stroke-width="1.1" stroke-dasharray="1.5 1.7" stroke-linejoin="round" />
<text x="288" y="174.2" font-size="7.2" fill="#d2d2d2" stroke="#d2d2d2" stroke-width="0.22" text-anchor="start" textLength="51.5" lengthAdjust="spacingAndGlyphs">CCI(14) -163.32</text>
<text x="288" y="212.6" font-size="7.2" fill="#d2d2d2" stroke="#d2d2d2" stroke-width="0.22" text-anchor="start" textLength="44.5" lengthAdjust="spacingAndGlyphs">RSI(14) 33.31</text>
<text x="288" y="252.2" font-size="7.2" fill="#d2d2d2" stroke="#d2d2d2" stroke-width="0.22" text-anchor="start" textLength="80" lengthAdjust="spacingAndGlyphs">Stoch(5,3,3) 28.59 34.54</text>
<text x="288" y="290.6" font-size="7.2" fill="#d2d2d2" stroke="#d2d2d2" stroke-width="0.22" text-anchor="start" textLength="70" lengthAdjust="spacingAndGlyphs">Momentum(14) 99.91</text>
<text x="288" y="329.9" font-size="7.2" fill="#d2d2d2" stroke="#d2d2d2" stroke-width="0.22" text-anchor="start" textLength="47" lengthAdjust="spacingAndGlyphs">ATR(21) 1.256</text>
<text x="288" y="368" font-size="7.2" fill="#d2d2d2" stroke="#d2d2d2" stroke-width="0.22" text-anchor="start" textLength="102.5" lengthAdjust="spacingAndGlyphs">MACD(12,26,9) -0.9177 -0.6708</text>
<line x1="284.3" y1="84.8" x2="284.3" y2="162.4" stroke="#b4b4b4" stroke-width="1.3"/>
<line x1="1202.9" y1="84.8" x2="1202.9" y2="162.4" stroke="#b0b0b0" stroke-width="1.5"/>
<line x1="283.7" y1="84.8" x2="1203.6" y2="84.8" stroke="#c4c4c4" stroke-width="1.1"/>
<rect x="283.7" y="161.65" width="919.9" height="3.45" fill="#6e6e6e"/>
<rect x="283.7" y="161.65" width="919.9" height="1.2" fill="#a2a2a2"/>
<rect x="283.7" y="163.90" width="919.9" height="1.2" fill="#cdcdcd"/>
<line x1="284.3" y1="164.5" x2="284.3" y2="201.4" stroke="#b4b4b4" stroke-width="1.3"/>
<line x1="1202.9" y1="164.5" x2="1202.9" y2="201.4" stroke="#b0b0b0" stroke-width="1.5"/>
<rect x="283.7" y="200.65" width="919.9" height="3.35" fill="#6e6e6e"/>
<rect x="283.7" y="200.65" width="919.9" height="1.2" fill="#a2a2a2"/>
<rect x="283.7" y="202.80" width="919.9" height="1.2" fill="#cdcdcd"/>
<line x1="284.3" y1="203.4" x2="284.3" y2="240.4" stroke="#b4b4b4" stroke-width="1.3"/>
<line x1="1202.9" y1="203.4" x2="1202.9" y2="240.4" stroke="#b0b0b0" stroke-width="1.5"/>
<rect x="283.7" y="239.65" width="919.9" height="3.45" fill="#6e6e6e"/>
<rect x="283.7" y="239.65" width="919.9" height="1.2" fill="#a2a2a2"/>
<rect x="283.7" y="241.90" width="919.9" height="1.2" fill="#cdcdcd"/>
<line x1="284.3" y1="242.5" x2="284.3" y2="279.6" stroke="#b4b4b4" stroke-width="1.3"/>
<line x1="1202.9" y1="242.5" x2="1202.9" y2="279.6" stroke="#b0b0b0" stroke-width="1.5"/>
<rect x="283.7" y="278.85" width="919.9" height="3.35" fill="#6e6e6e"/>
<rect x="283.7" y="278.85" width="919.9" height="1.2" fill="#a2a2a2"/>
<rect x="283.7" y="281.00" width="919.9" height="1.2" fill="#cdcdcd"/>
<line x1="284.3" y1="281.6" x2="284.3" y2="318.4" stroke="#b4b4b4" stroke-width="1.3"/>
<line x1="1202.9" y1="281.6" x2="1202.9" y2="318.4" stroke="#b0b0b0" stroke-width="1.5"/>
<rect x="283.7" y="317.65" width="919.9" height="3.35" fill="#6e6e6e"/>
<rect x="283.7" y="317.65" width="919.9" height="1.2" fill="#a2a2a2"/>
<rect x="283.7" y="319.80" width="919.9" height="1.2" fill="#cdcdcd"/>
<line x1="284.3" y1="320.4" x2="284.3" y2="356.5" stroke="#b4b4b4" stroke-width="1.3"/>
<line x1="1202.9" y1="320.4" x2="1202.9" y2="356.5" stroke="#b0b0b0" stroke-width="1.5"/>
<rect x="283.7" y="355.75" width="919.9" height="3.65" fill="#6e6e6e"/>
<rect x="283.7" y="355.75" width="919.9" height="1.2" fill="#a2a2a2"/>
<rect x="283.7" y="358.20" width="919.9" height="1.2" fill="#cdcdcd"/>
<line x1="284.3" y1="358.8" x2="284.3" y2="405.3" stroke="#b4b4b4" stroke-width="1.3"/>
<line x1="1202.9" y1="358.8" x2="1202.9" y2="405.3" stroke="#b0b0b0" stroke-width="1.5"/>
<line x1="283.7" y1="405.3" x2="1203.6" y2="405.3" stroke="#c4c4c4" stroke-width="1.2"/>
<line x1="1203.3" y1="88.8" x2="1206.3" y2="88.8" stroke="#c4c4c4" stroke-width="0.9"/>
<text x="1207.6" y="91.3" font-size="7.2" fill="#d2d2d2" stroke="#d2d2d2" stroke-width="0.22" text-anchor="start">4183.790</text>
<line x1="1203.3" y1="113.2" x2="1206.3" y2="113.2" stroke="#c4c4c4" stroke-width="0.9"/>
<text x="1207.6" y="115.7" font-size="7.2" fill="#d2d2d2" stroke="#d2d2d2" stroke-width="0.22" text-anchor="start">4169.400</text>
<line x1="1203.3" y1="137.9" x2="1206.3" y2="137.9" stroke="#c4c4c4" stroke-width="0.9"/>
<text x="1207.6" y="140.4" font-size="7.2" fill="#d2d2d2" stroke="#d2d2d2" stroke-width="0.22" text-anchor="start">4155.010</text>
<line x1="1203.3" y1="167.6" x2="1206.3" y2="167.6" stroke="#c4c4c4" stroke-width="0.9"/>
<text x="1207.6" y="170.1" font-size="7.2" fill="#d2d2d2" stroke="#d2d2d2" stroke-width="0.22" text-anchor="start">283.38</text>
<line x1="1203.3" y1="170.6" x2="1206.3" y2="170.6" stroke="#c4c4c4" stroke-width="0.9"/>
<text x="1207.6" y="173.1" font-size="7.2" fill="#d2d2d2" stroke="#d2d2d2" stroke-width="0.22" text-anchor="start">100.00</text>
<line x1="1203.3" y1="176.3" x2="1206.3" y2="176.3" stroke="#c4c4c4" stroke-width="0.9"/>
<text x="1207.6" y="178.8" font-size="7.2" fill="#d2d2d2" stroke="#d2d2d2" stroke-width="0.22" text-anchor="start">0.00</text>
<line x1="1203.3" y1="182.4" x2="1206.3" y2="182.4" stroke="#c4c4c4" stroke-width="0.9"/>
<text x="1207.6" y="184.9" font-size="7.2" fill="#d2d2d2" stroke="#d2d2d2" stroke-width="0.22" text-anchor="start">-100.00</text>
<line x1="1203.3" y1="198" x2="1206.3" y2="198" stroke="#c4c4c4" stroke-width="0.9"/>
<text x="1207.6" y="200.5" font-size="7.2" fill="#d2d2d2" stroke="#d2d2d2" stroke-width="0.22" text-anchor="start">-428.80</text>
<line x1="1203.3" y1="207.4" x2="1206.3" y2="207.4" stroke="#c4c4c4" stroke-width="0.9"/>
<text x="1207.6" y="209.9" font-size="7.2" fill="#d2d2d2" stroke="#d2d2d2" stroke-width="0.22" text-anchor="start">100.00</text>
<line x1="1203.3" y1="213.8" x2="1206.3" y2="213.8" stroke="#c4c4c4" stroke-width="0.9"/>
<text x="1207.6" y="216.3" font-size="7.2" fill="#d2d2d2" stroke="#d2d2d2" stroke-width="0.22" text-anchor="start">70.00</text>
<line x1="1203.3" y1="229.5" x2="1206.3" y2="229.5" stroke="#c4c4c4" stroke-width="0.9"/>
<text x="1207.6" y="232.0" font-size="7.2" fill="#d2d2d2" stroke="#d2d2d2" stroke-width="0.22" text-anchor="start">30.00</text>
<line x1="1203.3" y1="236.6" x2="1206.3" y2="236.6" stroke="#c4c4c4" stroke-width="0.9"/>
<text x="1207.6" y="239.1" font-size="7.2" fill="#d2d2d2" stroke="#d2d2d2" stroke-width="0.22" text-anchor="start">0.00</text>
<line x1="1203.3" y1="245.6" x2="1206.3" y2="245.6" stroke="#c4c4c4" stroke-width="0.9"/>
<text x="1207.6" y="248.1" font-size="7.2" fill="#d2d2d2" stroke="#d2d2d2" stroke-width="0.22" text-anchor="start">100.00</text>
<line x1="1203.3" y1="250.1" x2="1206.3" y2="250.1" stroke="#c4c4c4" stroke-width="0.9"/>
<text x="1207.6" y="252.6" font-size="7.2" fill="#d2d2d2" stroke="#d2d2d2" stroke-width="0.22" text-anchor="start">80.00</text>
<line x1="1203.3" y1="271.8" x2="1206.3" y2="271.8" stroke="#c4c4c4" stroke-width="0.9"/>
<text x="1207.6" y="274.3" font-size="7.2" fill="#d2d2d2" stroke="#d2d2d2" stroke-width="0.22" text-anchor="start">20.00</text>
<line x1="1203.3" y1="275.8" x2="1206.3" y2="275.8" stroke="#c4c4c4" stroke-width="0.9"/>
<text x="1207.6" y="278.3" font-size="7.2" fill="#d2d2d2" stroke="#d2d2d2" stroke-width="0.22" text-anchor="start">0.00</text>
<line x1="1203.3" y1="285" x2="1206.3" y2="285" stroke="#c4c4c4" stroke-width="0.9"/>
<text x="1207.6" y="287.5" font-size="7.2" fill="#d2d2d2" stroke="#d2d2d2" stroke-width="0.22" text-anchor="start">100.16</text>
<line x1="1203.3" y1="314.5" x2="1206.3" y2="314.5" stroke="#c4c4c4" stroke-width="0.9"/>
<text x="1207.6" y="317.0" font-size="7.2" fill="#d2d2d2" stroke="#d2d2d2" stroke-width="0.22" text-anchor="start">99.60</text>
<line x1="1203.3" y1="323.6" x2="1206.3" y2="323.6" stroke="#c4c4c4" stroke-width="0.9"/>
<text x="1207.6" y="326.1" font-size="7.2" fill="#d2d2d2" stroke="#d2d2d2" stroke-width="0.22" text-anchor="start">7.234</text>
<line x1="1203.3" y1="353.7" x2="1206.3" y2="353.7" stroke="#c4c4c4" stroke-width="0.9"/>
<text x="1207.6" y="356.2" font-size="7.2" fill="#d2d2d2" stroke="#d2d2d2" stroke-width="0.22" text-anchor="start">0.139</text>
<line x1="1203.3" y1="360.2" x2="1206.3" y2="360.2" stroke="#c4c4c4" stroke-width="0.9"/>
<text x="1207.6" y="362.7" font-size="7.2" fill="#d2d2d2" stroke="#d2d2d2" stroke-width="0.22" text-anchor="start">0.0000</text>
<line x1="1203.3" y1="362.4" x2="1206.3" y2="362.4" stroke="#c4c4c4" stroke-width="0.9"/>
<text x="1207.6" y="364.9" font-size="7.2" fill="#d2d2d2" stroke="#d2d2d2" stroke-width="0.22" text-anchor="start">0.2281</text>
<line x1="1203.3" y1="402.6" x2="1206.3" y2="402.6" stroke="#c4c4c4" stroke-width="0.9"/>
<text x="1207.6" y="405.1" font-size="7.2" fill="#d2d2d2" stroke="#d2d2d2" stroke-width="0.22" text-anchor="start">-3.9299</text>
<text x="285" y="415.6" font-size="7.2" fill="#d2d2d2" stroke="#d2d2d2" stroke-width="0.22" text-anchor="start" textLength="40" lengthAdjust="spacingAndGlyphs">28 Nov 2025</text>
<line x1="334.0" y1="405.3" x2="334.0" y2="408.6" stroke="#c4c4c4" stroke-width="0.9"/>
<text x="334.4" y="415.6" font-size="7.2" fill="#d2d2d2" stroke="#d2d2d2" stroke-width="0.22" text-anchor="start" textLength="42.4" lengthAdjust="spacingAndGlyphs">28 Nov 07:51</text>
<line x1="383.7" y1="405.3" x2="383.7" y2="408.6" stroke="#c4c4c4" stroke-width="0.9"/>
<text x="384.1" y="415.6" font-size="7.2" fill="#d2d2d2" stroke="#d2d2d2" stroke-width="0.22" text-anchor="start" textLength="42.4" lengthAdjust="spacingAndGlyphs">28 Nov 07:55</text>
<line x1="433.4" y1="405.3" x2="433.4" y2="408.6" stroke="#c4c4c4" stroke-width="0.9"/>
<text x="433.8" y="415.6" font-size="7.2" fill="#d2d2d2" stroke="#d2d2d2" stroke-width="0.22" text-anchor="start" textLength="42.4" lengthAdjust="spacingAndGlyphs">28 Nov 07:59</text>
<line x1="483.1" y1="405.3" x2="483.1" y2="408.6" stroke="#c4c4c4" stroke-width="0.9"/>
<text x="483.5" y="415.6" font-size="7.2" fill="#d2d2d2" stroke="#d2d2d2" stroke-width="0.22" text-anchor="start" textLength="42.4" lengthAdjust="spacingAndGlyphs">28 Nov 08:03</text>
<line x1="532.7" y1="405.3" x2="532.7" y2="408.6" stroke="#c4c4c4" stroke-width="0.9"/>
<text x="533.1" y="415.6" font-size="7.2" fill="#d2d2d2" stroke="#d2d2d2" stroke-width="0.22" text-anchor="start" textLength="42.4" lengthAdjust="spacingAndGlyphs">28 Nov 08:07</text>
<line x1="582.4" y1="405.3" x2="582.4" y2="408.6" stroke="#c4c4c4" stroke-width="0.9"/>
<text x="582.8" y="415.6" font-size="7.2" fill="#d2d2d2" stroke="#d2d2d2" stroke-width="0.22" text-anchor="start" textLength="42.4" lengthAdjust="spacingAndGlyphs">28 Nov 08:13</text>
<line x1="632.1" y1="405.3" x2="632.1" y2="408.6" stroke="#c4c4c4" stroke-width="0.9"/>
<text x="632.5" y="415.6" font-size="7.2" fill="#d2d2d2" stroke="#d2d2d2" stroke-width="0.22" text-anchor="start" textLength="42.4" lengthAdjust="spacingAndGlyphs">28 Nov 08:59</text>
<line x1="681.8" y1="405.3" x2="681.8" y2="408.6" stroke="#c4c4c4" stroke-width="0.9"/>
<text x="682.2" y="415.6" font-size="7.2" fill="#d2d2d2" stroke="#d2d2d2" stroke-width="0.22" text-anchor="start" textLength="42.4" lengthAdjust="spacingAndGlyphs">28 Nov 09:03</text>
<line x1="731.5" y1="405.3" x2="731.5" y2="408.6" stroke="#c4c4c4" stroke-width="0.9"/>
<text x="731.9" y="415.6" font-size="7.2" fill="#d2d2d2" stroke="#d2d2d2" stroke-width="0.22" text-anchor="start" textLength="42.4" lengthAdjust="spacingAndGlyphs">28 Nov 09:07</text>
<line x1="781.2" y1="405.3" x2="781.2" y2="408.6" stroke="#c4c4c4" stroke-width="0.9"/>
<text x="781.6" y="415.6" font-size="7.2" fill="#d2d2d2" stroke="#d2d2d2" stroke-width="0.22" text-anchor="start" textLength="42.4" lengthAdjust="spacingAndGlyphs">28 Nov 09:11</text>
<line x1="830.9" y1="405.3" x2="830.9" y2="408.6" stroke="#c4c4c4" stroke-width="0.9"/>
<text x="831.3" y="415.6" font-size="7.2" fill="#d2d2d2" stroke="#d2d2d2" stroke-width="0.22" text-anchor="start" textLength="42.4" lengthAdjust="spacingAndGlyphs">28 Nov 09:15</text>
<line x1="880.5" y1="405.3" x2="880.5" y2="408.6" stroke="#c4c4c4" stroke-width="0.9"/>
<text x="880.9" y="415.6" font-size="7.2" fill="#d2d2d2" stroke="#d2d2d2" stroke-width="0.22" text-anchor="start" textLength="42.4" lengthAdjust="spacingAndGlyphs">28 Nov 09:19</text>
<line x1="930.2" y1="405.3" x2="930.2" y2="408.6" stroke="#c4c4c4" stroke-width="0.9"/>
<text x="930.6" y="415.6" font-size="7.2" fill="#d2d2d2" stroke="#d2d2d2" stroke-width="0.22" text-anchor="start" textLength="42.4" lengthAdjust="spacingAndGlyphs">28 Nov 09:23</text>
<line x1="979.9" y1="405.3" x2="979.9" y2="408.6" stroke="#c4c4c4" stroke-width="0.9"/>
<text x="980.3" y="415.6" font-size="7.2" fill="#d2d2d2" stroke="#d2d2d2" stroke-width="0.22" text-anchor="start" textLength="42.4" lengthAdjust="spacingAndGlyphs">28 Nov 09:27</text>
<line x1="1029.6" y1="405.3" x2="1029.6" y2="408.6" stroke="#c4c4c4" stroke-width="0.9"/>
<text x="1030.0" y="415.6" font-size="7.2" fill="#d2d2d2" stroke="#d2d2d2" stroke-width="0.22" text-anchor="start" textLength="42.4" lengthAdjust="spacingAndGlyphs">28 Nov 09:31</text>
<line x1="1079.3" y1="405.3" x2="1079.3" y2="408.6" stroke="#c4c4c4" stroke-width="0.9"/>
<text x="1079.7" y="415.6" font-size="7.2" fill="#d2d2d2" stroke="#d2d2d2" stroke-width="0.22" text-anchor="start" textLength="42.4" lengthAdjust="spacingAndGlyphs">28 Nov 09:35</text>
<line x1="1129.0" y1="405.3" x2="1129.0" y2="408.6" stroke="#c4c4c4" stroke-width="0.9"/>
<text x="1129.4" y="415.6" font-size="7.2" fill="#d2d2d2" stroke="#d2d2d2" stroke-width="0.22" text-anchor="start" textLength="42.4" lengthAdjust="spacingAndGlyphs">28 Nov 09:39</text>
<line x1="1178.7" y1="405.3" x2="1178.7" y2="408.6" stroke="#c4c4c4" stroke-width="0.9"/>
<text x="1179.1" y="415.6" font-size="7.2" fill="#d2d2d2" stroke="#d2d2d2" stroke-width="0.22" text-anchor="start" textLength="42.4" lengthAdjust="spacingAndGlyphs">28 Nov 09:43</text>
</svg>
<div style="position:absolute;left:279.00px;top:83.00px;width:3.00px;height:340.00px;background:#f0f0f0;"></div>
<div style="position:absolute;left:282.00px;top:422.40px;width:966.00px;height:19.00px;background:#f0f0f0;"></div>
<div style="position:absolute;left:282.60px;top:422.40px;width:1.00px;height:15.50px;background:#b0b0b0;"></div>
<div style="position:absolute;top:423.20px;height:14px;line-height:14px;font-size:8.6px;color:#8a8a8a;white-space:nowrap;letter-spacing:-0.220px;left:294.20px;">GBPUSD,H1</div>
<div style="position:absolute;top:423.20px;height:14px;line-height:14px;font-size:8.6px;color:#8a8a8a;white-space:nowrap;letter-spacing:-0.220px;left:360.60px;">GBPUSD,H1</div>
<div style="position:absolute;top:423.20px;height:14px;line-height:14px;font-size:8.6px;color:#8a8a8a;white-space:nowrap;letter-spacing:0.264px;left:426.20px;">XAUUSD,M1</div>
<div style="position:absolute;top:423.20px;height:14px;line-height:14px;font-size:8.6px;color:#8a8a8a;white-space:nowrap;letter-spacing:-0.138px;left:495.60px;">GBPUSD,M1</div>
<div style="position:absolute;top:423.20px;height:14px;line-height:14px;font-size:8.6px;color:#8a8a8a;white-space:nowrap;letter-spacing:-0.220px;left:564.20px;">GBPUSD,H1</div>
<div style="position:absolute;top:423.20px;height:14px;line-height:14px;font-size:8.6px;color:#8a8a8a;white-space:nowrap;letter-spacing:0.115px;left:629.50px;">XAUUSD,M15</div>
<div style="position:absolute;top:423.20px;height:14px;line-height:14px;font-size:8.6px;color:#8a8a8a;white-space:nowrap;letter-spacing:0.264px;left:702.60px;">XAUUSD,M1</div>
<div style="position:absolute;top:423.20px;height:14px;line-height:14px;font-size:8.6px;color:#8a8a8a;white-space:nowrap;letter-spacing:-0.220px;left:771.40px;">GBPUSD,H1</div>
<div style="position:absolute;left:350.70px;top:424.50px;width:1.00px;height:11.50px;background:#8a8a8a;"></div>
<div style="position:absolute;left:416.40px;top:424.50px;width:1.00px;height:11.50px;background:#8a8a8a;"></div>
<div style="position:absolute;left:485.00px;top:424.50px;width:1.00px;height:11.50px;background:#8a8a8a;"></div>
<div style="position:absolute;left:554.00px;top:424.50px;width:1.00px;height:11.50px;background:#8a8a8a;"></div>
<div style="position:absolute;left:620.70px;top:424.50px;width:1.00px;height:11.50px;background:#8a8a8a;"></div>
<div style="position:absolute;left:693.10px;top:424.50px;width:1.00px;height:11.50px;background:#8a8a8a;"></div>
<div style="position:absolute;left:762.50px;top:424.50px;width:1.00px;height:11.50px;background:#8a8a8a;"></div>
<div style="position:absolute;left:830px;top:422.4px;width:66.4px;height:13.2px;background:#fff;border:1px solid #444;border-top:none;box-shadow:0.5px 0.5px 0 #999"></div>
<div style="position:absolute;top:422.80px;height:14px;line-height:14px;font-size:8.6px;color:#222;white-space:nowrap;letter-spacing:0.264px;left:837.00px;">XAUUSD,M1</div>
<svg style="left:1216px;top:426px" width="26" height="9" viewBox="0 0 26 9"><path d="M5.6 2L3.2 4.3L5.6 6.6Z" fill="#c4c4c4"/><path d="M19.2 2L21.6 4.3L19.2 6.6Z" fill="#b4b4b4"/></svg>
<div style="position:absolute;left:5.00px;top:441.20px;width:1243.00px;height:1.00px;background:#d0d0d0;"></div>
<div style="position:absolute;left:18.00px;top:442.00px;width:1216.00px;height:212.00px;background:#fff;"></div>
<div style="position:absolute;left:18.00px;top:456.80px;width:1216.00px;height:14.70px;background:#ebebeb;"></div>
<div style="position:absolute;left:18.00px;top:486.20px;width:1216.00px;height:14.70px;background:#ebebeb;"></div>
<div style="position:absolute;left:18.00px;top:515.60px;width:1216.00px;height:14.70px;background:#ebebeb;"></div>
<div style="position:absolute;left:18.00px;top:545.00px;width:1216.00px;height:14.70px;background:#ebebeb;"></div>
<div style="position:absolute;left:18.00px;top:574.40px;width:1216.00px;height:14.70px;background:#ebebeb;"></div>
<div style="position:absolute;left:18.00px;top:603.80px;width:1216.00px;height:14.70px;background:#ebebeb;"></div>
<div style="position:absolute;left:18.00px;top:633.20px;width:1216.00px;height:14.70px;background:#ebebeb;"></div>
<div style="position:absolute;left:5.00px;top:441.60px;width:12.90px;height:213.00px;background:#9db8d8;"></div>
<svg style="left:7.6px;top:446px" width="7" height="7" viewBox="0 0 7 7"><path d="M1 1L6 6M6 1L1 6" stroke="#111" stroke-width="1.2" fill="none"/></svg>
<div style="position:absolute;left:6.2px;top:654.2px;width:60px;height:12px;line-height:12px;font-size:8.6px;color:#222;transform-origin:0 0;transform:rotate(-90deg);white-space:nowrap">egy Tester</div>
<div style="position:absolute;top:442.90px;height:14px;line-height:14px;font-size:9.4px;color:#1a1a1a;white-space:nowrap;letter-spacing:0.009px;left:21.60px;">History Quality</div>
<div style="position:absolute;top:442.90px;height:14px;line-height:14px;font-size:9.2px;color:#1e1e1e;white-space:nowrap;letter-spacing:-0.502px;margin-right:0.502px;right:873.10px;text-align:right;">100%</div>
<div style="position:absolute;top:457.60px;height:14px;line-height:14px;font-size:9.4px;color:#1a1a1a;white-space:nowrap;letter-spacing:-0.135px;left:21.60px;">Bars</div>
<div style="position:absolute;top:457.60px;height:14px;line-height:14px;font-size:9.2px;color:#1e1e1e;white-space:nowrap;letter-spacing:-0.433px;margin-right:0.433px;right:873.10px;text-align:right;">17870</div>
<div style="position:absolute;top:457.60px;height:14px;line-height:14px;font-size:9.4px;color:#1a1a1a;white-space:nowrap;letter-spacing:-0.244px;left:431.90px;">Ticks</div>
<div style="position:absolute;top:457.60px;height:14px;line-height:14px;font-size:9.2px;color:#1e1e1e;white-space:nowrap;letter-spacing:-0.419px;margin-right:0.419px;right:463.40px;text-align:right;">5164406</div>
<div style="position:absolute;top:457.60px;height:14px;line-height:14px;font-size:9.4px;color:#1a1a1a;white-space:nowrap;letter-spacing:-0.053px;left:841.60px;">Symbols</div>
<div style="position:absolute;top:457.60px;height:14px;line-height:14px;font-size:9.2px;color:#1e1e1e;white-space:nowrap;letter-spacing:0.000px;margin-right:0.000px;right:49.00px;text-align:right;">1</div>
<div style="position:absolute;top:472.30px;height:14px;line-height:14px;font-size:9.4px;color:#1a1a1a;white-space:nowrap;letter-spacing:0.039px;left:21.60px;">Initial Deposit</div>
<div style="position:absolute;top:472.30px;height:14px;line-height:14px;font-size:9.2px;color:#1e1e1e;white-space:nowrap;letter-spacing:-0.358px;margin-right:0.358px;right:873.10px;text-align:right;">10 000.00</div>
<div style="position:absolute;top:487.00px;height:14px;line-height:14px;font-size:9.4px;color:#1a1a1a;white-space:nowrap;letter-spacing:-0.026px;left:21.60px;">Total Net Profit</div>
<div style="position:absolute;top:487.00px;height:14px;line-height:14px;font-size:9.2px;color:#1e1e1e;white-space:nowrap;letter-spacing:-0.276px;margin-right:0.276px;right:873.10px;text-align:right;">2 110.73</div>
<div style="position:absolute;top:487.00px;height:14px;line-height:14px;font-size:9.4px;color:#1a1a1a;white-space:nowrap;letter-spacing:-0.047px;left:431.90px;">Balance Drawdown Absolute</div>
<div style="position:absolute;top:487.00px;height:14px;line-height:14px;font-size:9.2px;color:#1e1e1e;white-space:nowrap;letter-spacing:-0.417px;margin-right:0.417px;right:463.40px;text-align:right;">70.02</div>
<div style="position:absolute;top:487.00px;height:14px;line-height:14px;font-size:9.4px;color:#1a1a1a;white-space:nowrap;letter-spacing:0.049px;left:841.60px;">Equity Drawdown Absolute</div>
<div style="position:absolute;top:487.00px;height:14px;line-height:14px;font-size:9.2px;color:#1e1e1e;white-space:nowrap;letter-spacing:-0.416px;margin-right:0.416px;right:49.00px;text-align:right;">908.30</div>
<div style="position:absolute;top:501.70px;height:14px;line-height:14px;font-size:9.4px;color:#1a1a1a;white-space:nowrap;letter-spacing:-0.123px;left:21.60px;">Gross Profit</div>
<div style="position:absolute;top:501.70px;height:14px;line-height:14px;font-size:9.2px;color:#1e1e1e;white-space:nowrap;letter-spacing:-0.384px;margin-right:0.384px;right:873.10px;text-align:right;">3 636.64</div>
<div style="position:absolute;top:501.70px;height:14px;line-height:14px;font-size:9.4px;color:#1a1a1a;white-space:nowrap;letter-spacing:-0.024px;left:431.90px;">Balance Drawdown Maximal</div>
<div style="position:absolute;top:501.70px;height:14px;line-height:14px;font-size:9.2px;color:#1e1e1e;white-space:nowrap;letter-spacing:-0.371px;margin-right:0.371px;right:463.40px;text-align:right;">256.59 (2.51%)</div>
<div style="position:absolute;top:501.70px;height:14px;line-height:14px;font-size:9.4px;color:#1a1a1a;white-space:nowrap;letter-spacing:0.052px;left:841.60px;">Equity Drawdown Maximal</div>
<div style="position:absolute;top:501.70px;height:14px;line-height:14px;font-size:9.2px;color:#1e1e1e;white-space:nowrap;letter-spacing:-0.296px;margin-right:0.296px;right:49.00px;text-align:right;">1 117.57 (10.95%)</div>
<div style="position:absolute;top:516.40px;height:14px;line-height:14px;font-size:9.4px;color:#1a1a1a;white-space:nowrap;letter-spacing:-0.398px;left:21.60px;">Gross Loss</div>
<div style="position:absolute;top:516.40px;height:14px;line-height:14px;font-size:9.2px;color:#1e1e1e;white-space:nowrap;letter-spacing:-0.244px;margin-right:0.244px;right:873.10px;text-align:right;">-1 525.91</div>
<div style="position:absolute;top:516.40px;height:14px;line-height:14px;font-size:9.4px;color:#1a1a1a;white-space:nowrap;letter-spacing:-0.146px;left:431.90px;">Balance Drawdown Relative</div>
<div style="position:absolute;top:516.40px;height:14px;line-height:14px;font-size:9.2px;color:#1e1e1e;white-space:nowrap;letter-spacing:-0.371px;margin-right:0.371px;right:463.40px;text-align:right;">2.51% (256.59)</div>
<div style="position:absolute;top:516.40px;height:14px;line-height:14px;font-size:9.4px;color:#1a1a1a;white-space:nowrap;letter-spacing:-0.082px;left:841.60px;">Equity Drawdown Relative</div>
<div style="position:absolute;top:516.40px;height:14px;line-height:14px;font-size:9.2px;color:#1e1e1e;white-space:nowrap;letter-spacing:-0.296px;margin-right:0.296px;right:49.00px;text-align:right;">10.95% (1 117.57)</div>
<div style="position:absolute;top:545.80px;height:14px;line-height:14px;font-size:9.4px;color:#1a1a1a;white-space:nowrap;letter-spacing:0.093px;left:21.60px;">Profit Factor</div>
<div style="position:absolute;top:545.80px;height:14px;line-height:14px;font-size:9.2px;color:#1e1e1e;white-space:nowrap;letter-spacing:-0.452px;margin-right:0.452px;right:873.10px;text-align:right;">2.38</div>
<div style="position:absolute;top:545.80px;height:14px;line-height:14px;font-size:9.4px;color:#1a1a1a;white-space:nowrap;letter-spacing:-0.138px;left:431.90px;">Expected Payoff</div>
<div style="position:absolute;top:545.80px;height:14px;line-height:14px;font-size:9.2px;color:#1e1e1e;white-space:nowrap;letter-spacing:-0.462px;margin-right:0.462px;right:463.40px;text-align:right;">2.69</div>
<div style="position:absolute;top:545.80px;height:14px;line-height:14px;font-size:9.4px;color:#1a1a1a;white-space:nowrap;letter-spacing:0.058px;left:841.60px;">Margin Level</div>
<div style="position:absolute;top:545.80px;height:14px;line-height:14px;font-size:9.2px;color:#1e1e1e;white-space:nowrap;letter-spacing:-0.393px;margin-right:0.393px;right:49.00px;text-align:right;">504.20%</div>
<div style="position:absolute;top:560.50px;height:14px;line-height:14px;font-size:9.4px;color:#1a1a1a;white-space:nowrap;letter-spacing:-0.163px;left:21.60px;">Recovery Factor</div>
<div style="position:absolute;top:560.50px;height:14px;line-height:14px;font-size:9.2px;color:#1e1e1e;white-space:nowrap;letter-spacing:-0.394px;margin-right:0.394px;right:873.10px;text-align:right;">1.89</div>
<div style="position:absolute;top:560.50px;height:14px;line-height:14px;font-size:9.4px;color:#1a1a1a;white-space:nowrap;letter-spacing:-0.237px;left:431.90px;">Sharpe Ratio</div>
<div style="position:absolute;top:560.50px;height:14px;line-height:14px;font-size:9.2px;color:#1e1e1e;white-space:nowrap;letter-spacing:-0.438px;margin-right:0.438px;right:463.40px;text-align:right;">8.62</div>
<div style="position:absolute;top:560.50px;height:14px;line-height:14px;font-size:9.4px;color:#1a1a1a;white-space:nowrap;letter-spacing:-0.044px;left:841.60px;">Z-Score</div>
<div style="position:absolute;top:560.50px;height:14px;line-height:14px;font-size:9.2px;color:#1e1e1e;white-space:nowrap;letter-spacing:-0.291px;margin-right:0.291px;right:49.00px;text-align:right;">-13.34 (99.74%)</div>
<div style="position:absolute;top:575.20px;height:14px;line-height:14px;font-size:9.4px;color:#1a1a1a;white-space:nowrap;letter-spacing:-0.159px;left:21.60px;">AHPR</div>
<div style="position:absolute;top:575.20px;height:14px;line-height:14px;font-size:9.2px;color:#1e1e1e;white-space:nowrap;letter-spacing:-0.355px;margin-right:0.355px;right:873.10px;text-align:right;">1.0002 (0.02%)</div>
<div style="position:absolute;top:575.20px;height:14px;line-height:14px;font-size:9.4px;color:#1a1a1a;white-space:nowrap;letter-spacing:-0.068px;left:431.90px;">LR Correlation</div>
<div style="position:absolute;top:575.20px;height:14px;line-height:14px;font-size:9.2px;color:#1e1e1e;white-space:nowrap;letter-spacing:-0.408px;margin-right:0.408px;right:463.40px;text-align:right;">1.00</div>
<div style="position:absolute;top:575.20px;height:14px;line-height:14px;font-size:9.4px;color:#1a1a1a;white-space:nowrap;letter-spacing:-0.170px;left:841.60px;">OnTester result</div>
<div style="position:absolute;top:575.20px;height:14px;line-height:14px;font-size:9.2px;color:#1e1e1e;white-space:nowrap;letter-spacing:0.000px;margin-right:0.000px;right:49.00px;text-align:right;">0</div>
<div style="position:absolute;top:589.90px;height:14px;line-height:14px;font-size:9.4px;color:#1a1a1a;white-space:nowrap;letter-spacing:-0.427px;left:21.60px;">GHPR</div>
<div style="position:absolute;top:589.90px;height:14px;line-height:14px;font-size:9.2px;color:#1e1e1e;white-space:nowrap;letter-spacing:-0.355px;margin-right:0.355px;right:873.10px;text-align:right;">1.0002 (0.02%)</div>
<div style="position:absolute;top:589.90px;height:14px;line-height:14px;font-size:9.4px;color:#1a1a1a;white-space:nowrap;letter-spacing:-0.274px;left:431.90px;">LR Standard Error</div>
<div style="position:absolute;top:589.90px;height:14px;line-height:14px;font-size:9.2px;color:#1e1e1e;white-space:nowrap;letter-spacing:-0.429px;margin-right:0.429px;right:463.40px;text-align:right;">31.91</div>
<div style="position:absolute;top:619.30px;height:14px;line-height:14px;font-size:9.4px;color:#1a1a1a;white-space:nowrap;letter-spacing:-0.246px;left:21.60px;">Total Trades</div>
<div style="position:absolute;top:619.30px;height:14px;line-height:14px;font-size:9.2px;color:#1e1e1e;white-space:nowrap;letter-spacing:-0.369px;margin-right:0.369px;right:873.10px;text-align:right;">786</div>
<div style="position:absolute;top:619.30px;height:14px;line-height:14px;font-size:9.4px;color:#1a1a1a;white-space:nowrap;letter-spacing:-0.181px;left:431.90px;">Short Trades (won %)</div>
<div style="position:absolute;top:619.30px;height:14px;line-height:14px;font-size:9.2px;color:#1e1e1e;white-space:nowrap;letter-spacing:-0.352px;margin-right:0.352px;right:463.40px;text-align:right;">334 (73.65%)</div>
<div style="position:absolute;top:619.30px;height:14px;line-height:14px;font-size:9.4px;color:#1a1a1a;white-space:nowrap;letter-spacing:-0.154px;left:841.60px;">Long Trades (won %)</div>
<div style="position:absolute;top:619.30px;height:14px;line-height:14px;font-size:9.2px;color:#1e1e1e;white-space:nowrap;letter-spacing:-0.359px;margin-right:0.359px;right:49.00px;text-align:right;">452 (74.78%)</div>
<div style="position:absolute;top:634.00px;height:14px;line-height:14px;font-size:9.4px;color:#1a1a1a;white-space:nowrap;letter-spacing:-0.223px;left:21.60px;">Total Deals</div>
<div style="position:absolute;top:634.00px;height:14px;line-height:14px;font-size:9.2px;color:#1e1e1e;white-space:nowrap;letter-spacing:-0.273px;margin-right:0.273px;right:873.10px;text-align:right;">1572</div>
<div style="position:absolute;top:634.00px;height:14px;line-height:14px;font-size:9.4px;color:#1a1a1a;white-space:nowrap;letter-spacing:-0.051px;left:431.90px;">Profit Trades (% of total)</div>
<div style="position:absolute;top:634.00px;height:14px;line-height:14px;font-size:9.2px;color:#1e1e1e;white-space:nowrap;letter-spacing:-0.347px;margin-right:0.347px;right:463.40px;text-align:right;">584 (74.30%)</div>
<div style="position:absolute;top:634.00px;height:14px;line-height:14px;font-size:9.4px;color:#1a1a1a;white-space:nowrap;letter-spacing:-0.186px;left:841.60px;">Loss Trades (% of total)</div>
<div style="position:absolute;top:634.00px;height:14px;line-height:14px;font-size:9.2px;color:#1e1e1e;white-space:nowrap;letter-spacing:-0.353px;margin-right:0.353px;right:49.00px;text-align:right;">202 (25.70%)</div>
<div style="position:absolute;top:648.70px;height:14px;line-height:14px;font-size:9.2px;color:#1e1e1e;white-space:nowrap;letter-spacing:0.054px;margin-right:-0.054px;right:873.10px;text-align:right;">Largest</div>
<div style="position:absolute;top:648.70px;height:14px;line-height:14px;font-size:9.4px;color:#1a1a1a;white-space:nowrap;left:431.90px;">profit trade</div>
<div style="position:absolute;top:648.70px;height:14px;line-height:14px;font-size:9.2px;color:#1e1e1e;white-space:nowrap;letter-spacing:-0.411px;margin-right:0.411px;right:463.40px;text-align:right;">268.38</div>
<div style="position:absolute;top:648.70px;height:14px;line-height:14px;font-size:9.4px;color:#1a1a1a;white-space:nowrap;left:841.60px;">loss trade</div>
<div style="position:absolute;top:648.70px;height:14px;line-height:14px;font-size:9.2px;color:#1e1e1e;white-space:nowrap;letter-spacing:-0.225px;margin-right:0.225px;right:49.00px;text-align:right;">-54.17</div>
<div style="position:absolute;left:431.2px;top:443.2px;width:802px;height:11.4px;background:#90f97e;border:1px solid #707070;box-sizing:border-box"></div>
<div style="position:absolute;left:1234.00px;top:442.00px;width:14.00px;height:212.00px;background:#f0f0f0;"></div>
<div style="position:absolute;left:1235.00px;top:455.40px;width:13.00px;height:34.00px;background:#cdcdcd;"></div>
<svg style="left:1237.4px;top:446.4px" width="7" height="5" viewBox="0 0 7 5"><path d="M0.6 4.2L3.5 1L6.4 4.2" stroke="#444" stroke-width="1.4" fill="none"/></svg>
<svg style="left:1237.4px;top:646.2px" width="7" height="5" viewBox="0 0 7 5"><path d="M0.6 0.8L3.5 4L6.4 0.8" stroke="#444" stroke-width="1.4" fill="none"/></svg>
</div></div></body></html>
